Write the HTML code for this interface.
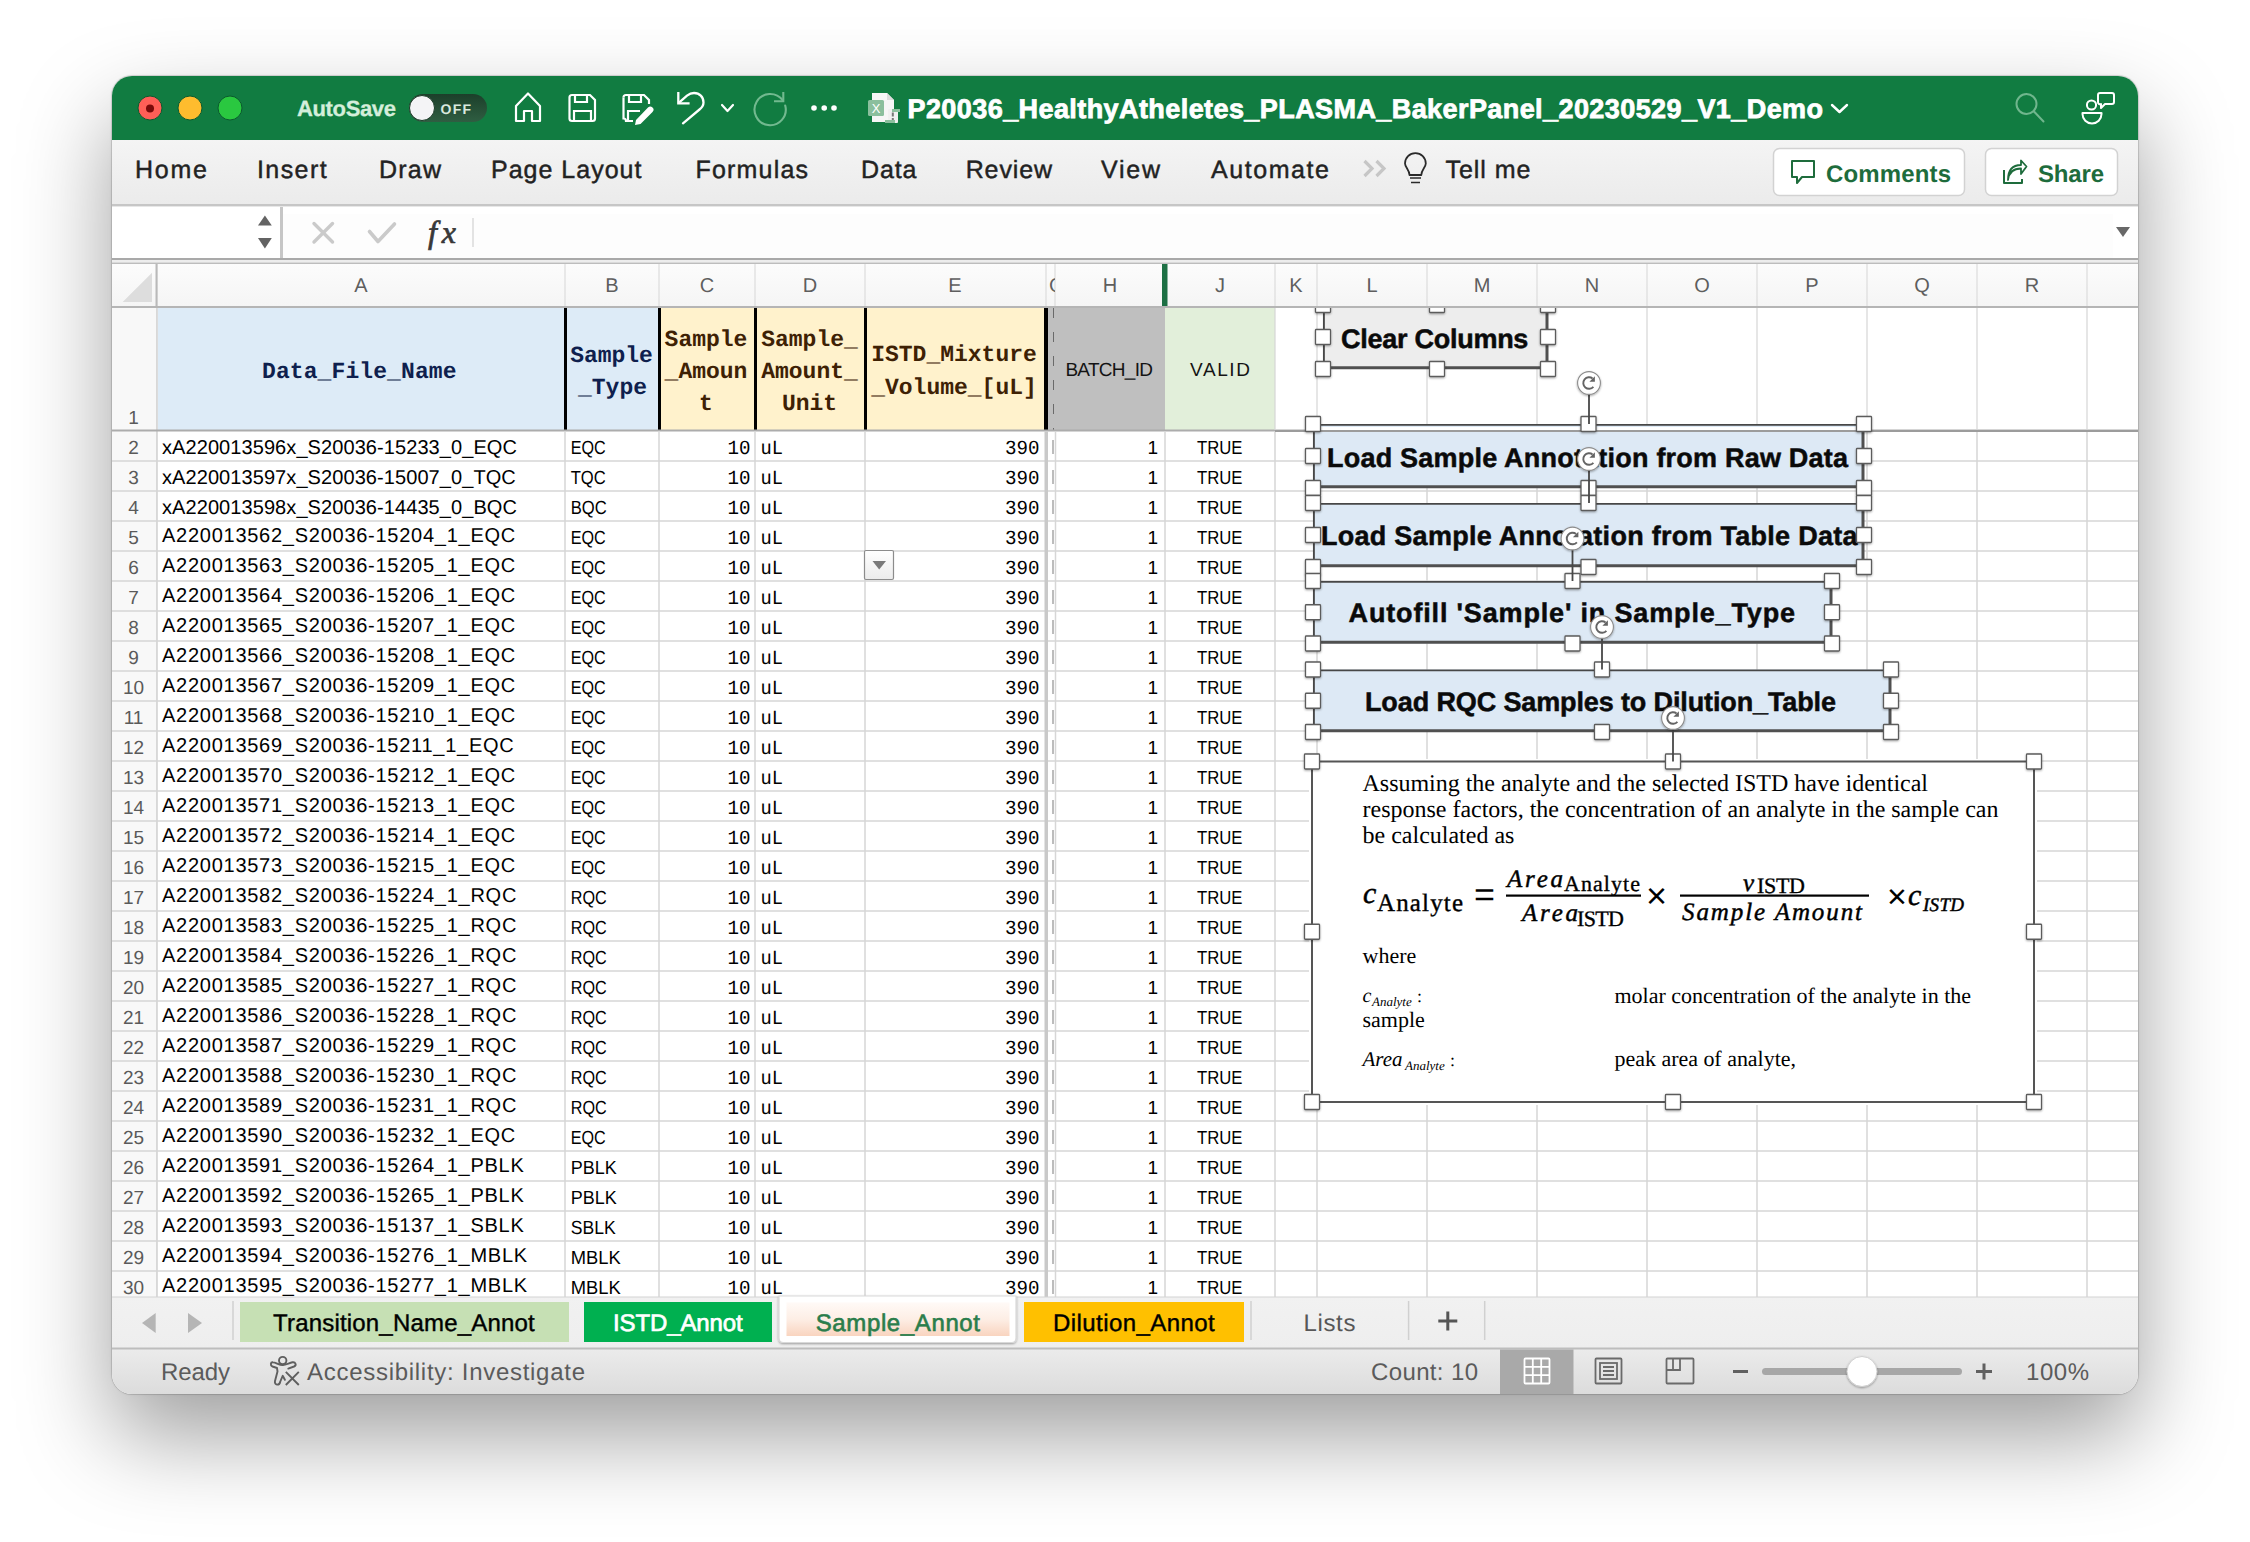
<!DOCTYPE html>
<html><head><meta charset="utf-8"><title>Excel</title>
<style>
html,body{margin:0;padding:0;background:#ffffff;}
body{width:2250px;height:1542px;position:relative;overflow:hidden;font-family:"Liberation Sans",sans-serif;}
#win{position:absolute;left:112px;top:76px;width:2026px;height:1318px;border-radius:20px;overflow:hidden;
box-shadow:0 42px 92px rgba(0,0,0,0.38),0 0 0 1px rgba(0,0,0,0.10),0 0 3px rgba(0,0,0,0.12);background:#fff;}
#win svg.main{position:absolute;left:-112px;top:-76px;}
</style></head>
<body>
<div id="win"><svg class="main" width="2250" height="1542" viewBox="0 0 2250 1542" text-rendering="geometricPrecision">
<defs>
<linearGradient id="gRib" x1="0" y1="0" x2="0" y2="1"><stop offset="0" stop-color="#f4f4f4"/><stop offset="1" stop-color="#ebebeb"/></linearGradient>
<linearGradient id="gColH" x1="0" y1="0" x2="0" y2="1"><stop offset="0" stop-color="#fcfcfc"/><stop offset="1" stop-color="#f5f5f5"/></linearGradient>
<linearGradient id="gStat" x1="0" y1="0" x2="0" y2="1"><stop offset="0" stop-color="#ebebeb"/><stop offset="1" stop-color="#dcdcdc"/></linearGradient>
<linearGradient id="gTabs" x1="0" y1="0" x2="0" y2="1"><stop offset="0" stop-color="#f1f1f1"/><stop offset="1" stop-color="#eeeeee"/></linearGradient>
<linearGradient id="gToggle" x1="0" y1="0" x2="0" y2="1"><stop offset="0" stop-color="#1c3f2a"/><stop offset="1" stop-color="#2f5e42"/></linearGradient>
<linearGradient id="gActive" x1="0" y1="0" x2="0" y2="1"><stop offset="0" stop-color="#fffaf7"/><stop offset="0.5" stop-color="#fdeee5"/><stop offset="1" stop-color="#f9d4bf"/></linearGradient>
<linearGradient id="gClear" x1="0" y1="0" x2="0" y2="1"><stop offset="0" stop-color="#f3f3f3"/><stop offset="1" stop-color="#e4e4e4"/></linearGradient>
<linearGradient id="gDrop" x1="0" y1="0" x2="0" y2="1"><stop offset="0" stop-color="#ffffff"/><stop offset="1" stop-color="#ececec"/></linearGradient>
<filter id="fSh" x="-50%" y="-50%" width="200%" height="200%"><feDropShadow dx="0" dy="1" stdDeviation="1.2" flood-color="#000" flood-opacity="0.35"/></filter>
</defs>
<rect x="112" y="76" width="2026" height="64" fill="#117c41"/>
<circle cx="150" cy="108" r="12" fill="#fe5f57" stroke="#0b5a2e" stroke-width="1"/>
<circle cx="190" cy="108" r="12" fill="#febc2e" stroke="#0b5a2e" stroke-width="1"/>
<circle cx="230" cy="108" r="12" fill="#2ac840" stroke="#0b5a2e" stroke-width="1"/>
<circle cx="150" cy="108.5" r="4" fill="#7a0a0a"/>
<text x="297" y="116" font-family="Liberation Sans" font-size="22" fill="#d4eedb" font-weight="bold" textLength="99" lengthAdjust="spacing" stroke="#d4eedb" stroke-width="0.3">AutoSave</text>
<rect x="409" y="94" width="78" height="28" fill="url(#gToggle)" rx="14"/>
<circle cx="422" cy="108" r="12.5" fill="#f4f4f6" stroke="#1b3a27" stroke-width="1"/>
<text x="440.5" y="113.8" font-family="Liberation Sans" font-size="14" fill="#d9e9de" font-weight="bold" textLength="30.5" lengthAdjust="spacing">OFF</text>
<path d="M516 106 L528 93.5 L540 106 L540 121 L532 121 L532 111 L524 111 L524 121 L516 121 Z" fill="none" stroke="#ffffff" stroke-width="2.2" stroke-linejoin="round"/>
<path d="M569.5 97.5 a2.5 2.5 0 0 1 2.5 -2.5 L590 95 L595 100 L595 118.5 a2.5 2.5 0 0 1 -2.5 2.5 L572 121 a2.5 2.5 0 0 1 -2.5 -2.5 Z" fill="none" stroke="#ffffff" stroke-width="2.2"/>
<path d="M575 95 L575 102 L587 102 L587 95" fill="none" stroke="#ffffff" stroke-width="2.2"/>
<path d="M574 121 L574 111 L591 111 L591 121" fill="none" stroke="#ffffff" stroke-width="2.2"/>
<path d="M623.5 97.5 a2.5 2.5 0 0 1 2.5 -2.5 L644 95 L649 100 L649 104" fill="none" stroke="#ffffff" stroke-width="2.2"/>
<path d="M623.5 97.5 L623.5 118.5 a2.5 2.5 0 0 1 2.5 2.5 L633 121" fill="none" stroke="#ffffff" stroke-width="2.2"/>
<path d="M629 95 L629 102 L641 102 L641 95" fill="none" stroke="#ffffff" stroke-width="2.2"/>
<path d="M628 121 L628 111 L640 111" fill="none" stroke="#ffffff" stroke-width="2.2"/>
<path d="M636 120 L648 107.5 a3 3 0 0 1 4.5 4.5 L640.5 124 L635 125 Z" fill="#ffffff"/>
<path d="M678.3 92 L678.3 103.3 L689.6 103.3" fill="none" stroke="#ffffff" stroke-width="2.3" stroke-linecap="butt" stroke-linejoin="miter"/>
<path d="M679 102.6 L687 95.6 C 690 93.3, 692 93, 694 93 C 699.5 93, 703.5 97, 703.5 102.5 C 703.5 105.5, 702 107.5, 699.5 109.5 L683 123.3" fill="none" stroke="#ffffff" stroke-width="2.3" stroke-linecap="round"/>
<path d="M722 105 L727.5 111 L733 105" fill="none" stroke="#ffffff" stroke-width="2.2" stroke-linecap="round" stroke-linejoin="round"/>
<path d="M782.6 100.2 A15.6 15.6 0 1 0 785.2 105.5" fill="none" stroke="#72b98f" stroke-width="2.1" stroke-linecap="round"/>
<path d="M783.3 92 L783.3 101.3 L774 101.3" fill="none" stroke="#72b98f" stroke-width="2.1" stroke-linecap="butt" stroke-linejoin="miter"/>
<circle cx="814" cy="108" r="2.8" fill="#fff"/>
<circle cx="824.2" cy="108" r="2.8" fill="#fff"/>
<circle cx="834" cy="108" r="2.8" fill="#fff"/>
<path d="M872 93 L887 93 L894 100 L894 122 L872 122 Z" fill="#f6f6f6"/>
<path d="M887 93 L887 100 L894 100" fill="#dcdcdc"/>
<rect x="868" y="100" width="16" height="16" fill="#8bbf9d" rx="1.5"/>
<text x="876" y="113" font-family="Liberation Sans" font-size="13" fill="#fff" text-anchor="middle">X</text>
<rect x="888" y="109" width="10" height="14" fill="#f0f0f0" rx="1"/>
<rect x="885" y="120" width="10" height="3" fill="#8bbf9d"/>
<rect x="892" y="109" width="8" height="3" fill="#8bbf9d"/>
<rect x="891.8" y="112.5" width="2" height="4" fill="#777"/>
<rect x="891.8" y="118" width="2" height="2" fill="#777"/>
<text x="907.5" y="118" font-family="Liberation Sans" font-size="27" fill="#fff" font-weight="bold" textLength="915.5" lengthAdjust="spacing" stroke="#fff" stroke-width="0.8">P20036_HealthyAtheletes_PLASMA_BakerPanel_20230529_V1_Demo</text>
<path d="M1832 105 L1839.5 112 L1847 105" fill="none" stroke="#ffffff" stroke-width="2.4" stroke-linecap="round" stroke-linejoin="round"/>
<circle cx="2026.5" cy="104" r="10" fill="none" stroke="#70b68d" stroke-width="2"/>
<line x1="2034" y1="111.5" x2="2043.5" y2="121.5" stroke="#70b68d" stroke-width="2" stroke-linecap="round"/>
<circle cx="2091.5" cy="105" r="4.6" fill="none" stroke="#fff" stroke-width="2"/>
<path d="M2082.5 113 H2101.5 V114 A9.5 9.5 0 0 1 2082.5 114 Z" fill="none" stroke="#ffffff" stroke-width="2" stroke-linejoin="round"/>
<path d="M2100 93 L2112 93 A2 2 0 0 1 2114 95 L2114 102 A2 2 0 0 1 2112 104 L2105 104 L2101 108 L2101 104 A 2 2 0 0 1 2098 102 L2098 95 A2 2 0 0 1 2100 93 Z" fill="#117c41" stroke="#ffffff" stroke-width="2" stroke-linejoin="round"/>
<rect x="112" y="140" width="2026" height="65" fill="url(#gRib)"/>
<rect x="112" y="204" width="2026" height="2.2" fill="#c6c6c6"/>
<rect x="112" y="206.2" width="2026" height="1" fill="#e4e4e4"/>
<text x="135" y="178" font-family="Liberation Sans" font-size="25" fill="#222" textLength="72" lengthAdjust="spacing" stroke="#222" stroke-width="0.45">Home</text>
<text x="257" y="178" font-family="Liberation Sans" font-size="25" fill="#222" textLength="69.6" lengthAdjust="spacing" stroke="#222" stroke-width="0.45">Insert</text>
<text x="379" y="178" font-family="Liberation Sans" font-size="25" fill="#222" textLength="62" lengthAdjust="spacing" stroke="#222" stroke-width="0.45">Draw</text>
<text x="491" y="178" font-family="Liberation Sans" font-size="25" fill="#222" textLength="150.4" lengthAdjust="spacing" stroke="#222" stroke-width="0.45">Page Layout</text>
<text x="695.4" y="178" font-family="Liberation Sans" font-size="25" fill="#222" textLength="112.6" lengthAdjust="spacing" stroke="#222" stroke-width="0.45">Formulas</text>
<text x="861" y="178" font-family="Liberation Sans" font-size="25" fill="#222" textLength="55.4" lengthAdjust="spacing" stroke="#222" stroke-width="0.45">Data</text>
<text x="965.7" y="178" font-family="Liberation Sans" font-size="25" fill="#222" textLength="86.3" lengthAdjust="spacing" stroke="#222" stroke-width="0.45">Review</text>
<text x="1101" y="178" font-family="Liberation Sans" font-size="25" fill="#222" textLength="59" lengthAdjust="spacing" stroke="#222" stroke-width="0.45">View</text>
<text x="1211" y="178" font-family="Liberation Sans" font-size="25" fill="#222" textLength="118" lengthAdjust="spacing" stroke="#222" stroke-width="0.45">Automate</text>
<text x="1445.6" y="178" font-family="Liberation Sans" font-size="25" fill="#222" textLength="84.8" lengthAdjust="spacing" stroke="#222" stroke-width="0.45">Tell me</text>
<path d="M1364.5 161 L1372 168.5 L1364.5 176 M1376.5 161 L1384 168.5 L1376.5 176" fill="none" stroke="#c6c6c6" stroke-width="3.2"/>
<path d="M1409.5 175 C 1409.5 170, 1405 167, 1405 163.5 A 10.4 10.4 0 0 1 1425.8 163.5 C 1425.8 167, 1421.3 170, 1421.3 175 Z" fill="none" stroke="#2a2a2a" stroke-width="1.8" stroke-linejoin="round"/>
<line x1="1410" y1="178" x2="1421" y2="178" stroke="#2a2a2a" stroke-width="1.6" />
<line x1="1411" y1="182.5" x2="1420" y2="182.5" stroke="#2a2a2a" stroke-width="1.6" />
<rect x="1773.5" y="148.5" width="191" height="47" fill="#ffffff" stroke="#d2d2d2" stroke-width="1.5" rx="6"/>
<rect x="1985.5" y="148.5" width="132" height="47" fill="#ffffff" stroke="#d2d2d2" stroke-width="1.5" rx="6"/>
<path d="M1792 161 L1814 161 L1814 177 L1802 177 L1797 183 L1797 177 L1792 177 Z" fill="none" stroke="#1e6c3c" stroke-width="2" stroke-linejoin="round"/>
<text x="1826" y="182" font-family="Liberation Sans" font-size="24" fill="#1e6c3c" font-weight="bold" textLength="125" lengthAdjust="spacing">Comments</text>
<path d="M2004 170 L2004 183 L2022 183 L2022 179" fill="none" stroke="#1e6c3c" stroke-width="2" stroke-linejoin="round"/>
<path d="M2008 180 C 2009 172, 2013 168.5, 2021 168.5 L2021 174 L2026.5 166.5 L2021 160.5 L2021 165 C 2013 165, 2008 170, 2008 180 Z" fill="none" stroke="#1e6c3c" stroke-width="1.8" stroke-linejoin="round"/>
<text x="2038" y="182" font-family="Liberation Sans" font-size="24" fill="#1e6c3c" font-weight="bold" textLength="66" lengthAdjust="spacing">Share</text>
<rect x="112" y="207" width="2026" height="51" fill="#ffffff"/>
<rect x="283" y="214" width="1830" height="44" fill="#fdfdfd"/>
<rect x="280" y="207" width="3" height="51" fill="#c6c6c6"/>
<path d="M258 225.5 L271.8 225.5 L264.9 215.6 Z" fill="#636363"/>
<path d="M258 238 L271.8 238 L264.9 248.6 Z" fill="#636363"/>
<line x1="314" y1="223.5" x2="332.5" y2="242" stroke="#cacaca" stroke-width="3.4" stroke-linecap="round"/>
<line x1="332.5" y1="223.5" x2="314" y2="242" stroke="#cacaca" stroke-width="3.4" stroke-linecap="round"/>
<path d="M369.5 231.5 L378 241.5 L394.5 224" fill="none" stroke="#cacaca" stroke-width="3.6" stroke-linecap="round" stroke-linejoin="round"/>
<text x="428" y="242.5" font-family="Liberation Serif" font-size="32" fill="#383838" textLength="28" lengthAdjust="spacing" style="font-style:italic" stroke="#383838" stroke-width="0.7">fx</text>
<line x1="473" y1="218" x2="473" y2="247" stroke="#dadada" stroke-width="1.5" />
<path d="M2116 227 L2130 227 L2123 237 Z" fill="#686868"/>
<rect x="112" y="258" width="2026" height="2" fill="#a9a9a9"/>
<rect x="112" y="260" width="2026" height="2.5" fill="#ededed"/>
<rect x="112" y="262.5" width="2026" height="1.5" fill="#bdbdbd"/>
<rect x="112" y="264" width="2026" height="43" fill="url(#gColH)"/>
<line x1="157" y1="264" x2="157" y2="307" stroke="#dcdcdc" stroke-width="1.2" />
<line x1="565" y1="264" x2="565" y2="307" stroke="#dcdcdc" stroke-width="1.2" />
<line x1="659" y1="264" x2="659" y2="307" stroke="#dcdcdc" stroke-width="1.2" />
<line x1="755" y1="264" x2="755" y2="307" stroke="#dcdcdc" stroke-width="1.2" />
<line x1="865" y1="264" x2="865" y2="307" stroke="#dcdcdc" stroke-width="1.2" />
<line x1="1046" y1="264" x2="1046" y2="307" stroke="#dcdcdc" stroke-width="1.2" />
<line x1="1055" y1="264" x2="1055" y2="307" stroke="#dcdcdc" stroke-width="1.2" />
<line x1="1165" y1="264" x2="1165" y2="307" stroke="#dcdcdc" stroke-width="1.2" />
<line x1="1275" y1="264" x2="1275" y2="307" stroke="#dcdcdc" stroke-width="1.2" />
<line x1="1317" y1="264" x2="1317" y2="307" stroke="#dcdcdc" stroke-width="1.2" />
<line x1="1427" y1="264" x2="1427" y2="307" stroke="#dcdcdc" stroke-width="1.2" />
<line x1="1537" y1="264" x2="1537" y2="307" stroke="#dcdcdc" stroke-width="1.2" />
<line x1="1647" y1="264" x2="1647" y2="307" stroke="#dcdcdc" stroke-width="1.2" />
<line x1="1757" y1="264" x2="1757" y2="307" stroke="#dcdcdc" stroke-width="1.2" />
<line x1="1867" y1="264" x2="1867" y2="307" stroke="#dcdcdc" stroke-width="1.2" />
<line x1="1977" y1="264" x2="1977" y2="307" stroke="#dcdcdc" stroke-width="1.2" />
<line x1="2087" y1="264" x2="2087" y2="307" stroke="#dcdcdc" stroke-width="1.2" />
<line x1="156.5" y1="264" x2="156.5" y2="1297" stroke="#b9b9b9" stroke-width="2" />
<path d="M122.7 302 L152 302 L152 272.7 Z" fill="#dddddd"/>
<text x="361" y="292" font-family="Liberation Sans" font-size="20" fill="#5e5e5e" text-anchor="middle">A</text>
<text x="612" y="292" font-family="Liberation Sans" font-size="20" fill="#5e5e5e" text-anchor="middle">B</text>
<text x="707" y="292" font-family="Liberation Sans" font-size="20" fill="#5e5e5e" text-anchor="middle">C</text>
<text x="810" y="292" font-family="Liberation Sans" font-size="20" fill="#5e5e5e" text-anchor="middle">D</text>
<text x="955" y="292" font-family="Liberation Sans" font-size="20" fill="#5e5e5e" text-anchor="middle">E</text>
<text x="1110" y="292" font-family="Liberation Sans" font-size="20" fill="#5e5e5e" text-anchor="middle">H</text>
<text x="1220" y="292" font-family="Liberation Sans" font-size="20" fill="#5e5e5e" text-anchor="middle">J</text>
<text x="1296" y="292" font-family="Liberation Sans" font-size="20" fill="#5e5e5e" text-anchor="middle">K</text>
<text x="1372" y="292" font-family="Liberation Sans" font-size="20" fill="#5e5e5e" text-anchor="middle">L</text>
<text x="1482" y="292" font-family="Liberation Sans" font-size="20" fill="#5e5e5e" text-anchor="middle">M</text>
<text x="1592" y="292" font-family="Liberation Sans" font-size="20" fill="#5e5e5e" text-anchor="middle">N</text>
<text x="1702" y="292" font-family="Liberation Sans" font-size="20" fill="#5e5e5e" text-anchor="middle">O</text>
<text x="1812" y="292" font-family="Liberation Sans" font-size="20" fill="#5e5e5e" text-anchor="middle">P</text>
<text x="1922" y="292" font-family="Liberation Sans" font-size="20" fill="#5e5e5e" text-anchor="middle">Q</text>
<text x="2032" y="292" font-family="Liberation Sans" font-size="20" fill="#5e5e5e" text-anchor="middle">R</text>
<svg x="1048" y="264" width="7" height="43"><text x="1" y="28" font-family="Liberation Sans" font-size="20" fill="#5e5e5e">G</text></svg>
<rect x="1162" y="264" width="5.5" height="43" fill="#1d7044"/>
<rect x="112" y="306" width="2026" height="2" fill="#b5b5b5"/>
<rect x="112" y="308" width="44.5" height="989" fill="#f8f8f8"/>
<rect x="158" y="308" width="407" height="122" fill="#ddebf7"/>
<rect x="565" y="308" width="94" height="122" fill="#ddebf7"/>
<rect x="659" y="308" width="386" height="122" fill="#fff2cc"/>
<rect x="1046" y="308" width="119" height="122" fill="#bfbfbf"/>
<rect x="1165" y="308" width="110" height="122" fill="#e2efda"/>
<rect x="564" y="308" width="3" height="122" fill="#000"/>
<rect x="658" y="308" width="3" height="122" fill="#000"/>
<rect x="754" y="308" width="3" height="122" fill="#000"/>
<rect x="864" y="308" width="3" height="122" fill="#000"/>
<rect x="1044" y="308" width="4" height="122" fill="#000"/>
<line x1="1053.5" y1="308" x2="1053.5" y2="430" stroke="#6a6a6a" stroke-width="1" stroke-dasharray="10 14"/>
<text x="133.5" y="424" font-family="Liberation Sans" font-size="19" fill="#5a5a5a" text-anchor="middle">1</text>
<text x="262" y="378" font-family="Liberation Mono" font-size="23" fill="#0f1f4e" font-weight="bold" textLength="194.5" lengthAdjust="spacing">Data_File_Name</text>
<text x="611.5" y="362" font-family="Liberation Mono" font-size="23" fill="#0f1f4e" font-weight="bold" text-anchor="middle" textLength="82.5" lengthAdjust="spacing">Sample</text>
<text x="612.5" y="394" font-family="Liberation Mono" font-size="23" fill="#0f1f4e" font-weight="bold" text-anchor="middle" textLength="69" lengthAdjust="spacing">_Type</text>
<text x="706" y="345.5" font-family="Liberation Mono" font-size="23" fill="#3e2104" font-weight="bold" text-anchor="middle">Sample</text>
<text x="706" y="377.5" font-family="Liberation Mono" font-size="23" fill="#3e2104" font-weight="bold" text-anchor="middle">_Amoun</text>
<text x="706" y="409.5" font-family="Liberation Mono" font-size="23" fill="#3e2104" font-weight="bold" text-anchor="middle">t</text>
<text x="809.5" y="345.5" font-family="Liberation Mono" font-size="23" fill="#3e2104" font-weight="bold" text-anchor="middle">Sample_</text>
<text x="809.5" y="377.5" font-family="Liberation Mono" font-size="23" fill="#3e2104" font-weight="bold" text-anchor="middle">Amount_</text>
<text x="809.5" y="409.5" font-family="Liberation Mono" font-size="23" fill="#3e2104" font-weight="bold" text-anchor="middle">Unit</text>
<text x="954" y="361" font-family="Liberation Mono" font-size="23" fill="#3e2104" font-weight="bold" text-anchor="middle">ISTD_Mixture</text>
<text x="954" y="393.8" font-family="Liberation Mono" font-size="23" fill="#3e2104" font-weight="bold" text-anchor="middle">_Volume_[uL]</text>
<text x="1065.4" y="376" font-family="Liberation Sans" font-size="19" fill="#141414" textLength="87.6" lengthAdjust="spacing">BATCH_ID</text>
<text x="1190" y="376" font-family="Liberation Sans" font-size="19" fill="#141414" textLength="60" lengthAdjust="spacing">VALID</text>
<rect x="112" y="429.5" width="2026" height="2" fill="#acacac"/>
<line x1="112" y1="461" x2="2138" y2="461" stroke="#d6d6d6" stroke-width="1.5" />
<line x1="112" y1="491" x2="2138" y2="491" stroke="#d6d6d6" stroke-width="1.5" />
<line x1="112" y1="521" x2="2138" y2="521" stroke="#d6d6d6" stroke-width="1.5" />
<line x1="112" y1="551" x2="2138" y2="551" stroke="#d6d6d6" stroke-width="1.5" />
<line x1="112" y1="581" x2="2138" y2="581" stroke="#d6d6d6" stroke-width="1.5" />
<line x1="112" y1="611" x2="2138" y2="611" stroke="#d6d6d6" stroke-width="1.5" />
<line x1="112" y1="641" x2="2138" y2="641" stroke="#d6d6d6" stroke-width="1.5" />
<line x1="112" y1="671" x2="2138" y2="671" stroke="#d6d6d6" stroke-width="1.5" />
<line x1="112" y1="701" x2="2138" y2="701" stroke="#d6d6d6" stroke-width="1.5" />
<line x1="112" y1="731" x2="2138" y2="731" stroke="#d6d6d6" stroke-width="1.5" />
<line x1="112" y1="761" x2="2138" y2="761" stroke="#d6d6d6" stroke-width="1.5" />
<line x1="112" y1="791" x2="2138" y2="791" stroke="#d6d6d6" stroke-width="1.5" />
<line x1="112" y1="821" x2="2138" y2="821" stroke="#d6d6d6" stroke-width="1.5" />
<line x1="112" y1="851" x2="2138" y2="851" stroke="#d6d6d6" stroke-width="1.5" />
<line x1="112" y1="881" x2="2138" y2="881" stroke="#d6d6d6" stroke-width="1.5" />
<line x1="112" y1="911" x2="2138" y2="911" stroke="#d6d6d6" stroke-width="1.5" />
<line x1="112" y1="941" x2="2138" y2="941" stroke="#d6d6d6" stroke-width="1.5" />
<line x1="112" y1="971" x2="2138" y2="971" stroke="#d6d6d6" stroke-width="1.5" />
<line x1="112" y1="1001" x2="2138" y2="1001" stroke="#d6d6d6" stroke-width="1.5" />
<line x1="112" y1="1031" x2="2138" y2="1031" stroke="#d6d6d6" stroke-width="1.5" />
<line x1="112" y1="1061" x2="2138" y2="1061" stroke="#d6d6d6" stroke-width="1.5" />
<line x1="112" y1="1091" x2="2138" y2="1091" stroke="#d6d6d6" stroke-width="1.5" />
<line x1="112" y1="1121" x2="2138" y2="1121" stroke="#d6d6d6" stroke-width="1.5" />
<line x1="112" y1="1151" x2="2138" y2="1151" stroke="#d6d6d6" stroke-width="1.5" />
<line x1="112" y1="1181" x2="2138" y2="1181" stroke="#d6d6d6" stroke-width="1.5" />
<line x1="112" y1="1211" x2="2138" y2="1211" stroke="#d6d6d6" stroke-width="1.5" />
<line x1="112" y1="1241" x2="2138" y2="1241" stroke="#d6d6d6" stroke-width="1.5" />
<line x1="112" y1="1271" x2="2138" y2="1271" stroke="#d6d6d6" stroke-width="1.5" />
<line x1="565" y1="431.5" x2="565" y2="1297" stroke="#d6d6d6" stroke-width="1.5" />
<line x1="659" y1="431.5" x2="659" y2="1297" stroke="#d6d6d6" stroke-width="1.5" />
<line x1="755" y1="431.5" x2="755" y2="1297" stroke="#d6d6d6" stroke-width="1.5" />
<line x1="865" y1="431.5" x2="865" y2="1297" stroke="#d6d6d6" stroke-width="1.5" />
<line x1="1055.5" y1="431.5" x2="1055.5" y2="1297" stroke="#d6d6d6" stroke-width="1.5" />
<line x1="1165" y1="431.5" x2="1165" y2="1297" stroke="#d6d6d6" stroke-width="1.5" />
<line x1="1275" y1="431.5" x2="1275" y2="1297" stroke="#d6d6d6" stroke-width="1.5" />
<line x1="1317" y1="431.5" x2="1317" y2="1297" stroke="#d6d6d6" stroke-width="1.5" />
<line x1="1427" y1="431.5" x2="1427" y2="1297" stroke="#d6d6d6" stroke-width="1.5" />
<line x1="1537" y1="431.5" x2="1537" y2="1297" stroke="#d6d6d6" stroke-width="1.5" />
<line x1="1647" y1="431.5" x2="1647" y2="1297" stroke="#d6d6d6" stroke-width="1.5" />
<line x1="1757" y1="431.5" x2="1757" y2="1297" stroke="#d6d6d6" stroke-width="1.5" />
<line x1="1867" y1="431.5" x2="1867" y2="1297" stroke="#d6d6d6" stroke-width="1.5" />
<line x1="1977" y1="431.5" x2="1977" y2="1297" stroke="#d6d6d6" stroke-width="1.5" />
<line x1="2087" y1="431.5" x2="2087" y2="1297" stroke="#d6d6d6" stroke-width="1.5" />
<rect x="1044.5" y="431.5" width="3.5" height="866" fill="#c9c9c9"/>
<line x1="1275" y1="308" x2="1275" y2="430" stroke="#d6d6d6" stroke-width="1.2" />
<line x1="1317" y1="308" x2="1317" y2="430" stroke="#d6d6d6" stroke-width="1.2" />
<line x1="1427" y1="308" x2="1427" y2="430" stroke="#d6d6d6" stroke-width="1.2" />
<line x1="1537" y1="308" x2="1537" y2="430" stroke="#d6d6d6" stroke-width="1.2" />
<line x1="1647" y1="308" x2="1647" y2="430" stroke="#d6d6d6" stroke-width="1.2" />
<line x1="1757" y1="308" x2="1757" y2="430" stroke="#d6d6d6" stroke-width="1.2" />
<line x1="1867" y1="308" x2="1867" y2="430" stroke="#d6d6d6" stroke-width="1.2" />
<line x1="1977" y1="308" x2="1977" y2="430" stroke="#d6d6d6" stroke-width="1.2" />
<line x1="2087" y1="308" x2="2087" y2="430" stroke="#d6d6d6" stroke-width="1.2" />
<g id="rows">
<text x="133.5" y="454" font-family="Liberation Sans" font-size="19" fill="#5a5a5a" text-anchor="middle">2</text>
<text x="162" y="454" font-family="Liberation Sans" font-size="20" fill="#000" style="letter-spacing:0.08px">xA220013596x_S20036-15233_0_EQC</text>
<text x="570.7" y="454" font-family="Liberation Sans" font-size="19" fill="#000" textLength="35" lengthAdjust="spacingAndGlyphs">EQC</text>
<text x="750.5" y="454" font-family="Liberation Mono" font-size="20" fill="#000" text-anchor="end" textLength="23" lengthAdjust="spacingAndGlyphs">10</text>
<text x="760.5" y="454" font-family="Liberation Mono" font-size="20" fill="#000" textLength="22.5" lengthAdjust="spacingAndGlyphs">uL</text>
<text x="1039.5" y="454" font-family="Liberation Mono" font-size="20" fill="#000" text-anchor="end" textLength="34.5" lengthAdjust="spacingAndGlyphs">390</text>
<rect x="1052.5" y="440" width="1" height="14" fill="#7a7a7a"/>
<text x="1158" y="454" font-family="Liberation Sans" font-size="19" fill="#000" text-anchor="end">1</text>
<text x="1219.7" y="454" font-family="Liberation Sans" font-size="19" fill="#000" text-anchor="middle" textLength="45.5" lengthAdjust="spacingAndGlyphs">TRUE</text>
<text x="133.5" y="484" font-family="Liberation Sans" font-size="19" fill="#5a5a5a" text-anchor="middle">3</text>
<text x="162" y="484" font-family="Liberation Sans" font-size="20" fill="#000" style="letter-spacing:0.08px">xA220013597x_S20036-15007_0_TQC</text>
<text x="570.7" y="484" font-family="Liberation Sans" font-size="19" fill="#000" textLength="35" lengthAdjust="spacingAndGlyphs">TQC</text>
<text x="750.5" y="484" font-family="Liberation Mono" font-size="20" fill="#000" text-anchor="end" textLength="23" lengthAdjust="spacingAndGlyphs">10</text>
<text x="760.5" y="484" font-family="Liberation Mono" font-size="20" fill="#000" textLength="22.5" lengthAdjust="spacingAndGlyphs">uL</text>
<text x="1039.5" y="484" font-family="Liberation Mono" font-size="20" fill="#000" text-anchor="end" textLength="34.5" lengthAdjust="spacingAndGlyphs">390</text>
<rect x="1052.5" y="470" width="1" height="14" fill="#7a7a7a"/>
<text x="1158" y="484" font-family="Liberation Sans" font-size="19" fill="#000" text-anchor="end">1</text>
<text x="1219.7" y="484" font-family="Liberation Sans" font-size="19" fill="#000" text-anchor="middle" textLength="45.5" lengthAdjust="spacingAndGlyphs">TRUE</text>
<text x="133.5" y="514" font-family="Liberation Sans" font-size="19" fill="#5a5a5a" text-anchor="middle">4</text>
<text x="162" y="514" font-family="Liberation Sans" font-size="20" fill="#000" style="letter-spacing:0.08px">xA220013598x_S20036-14435_0_BQC</text>
<text x="570.7" y="514" font-family="Liberation Sans" font-size="19" fill="#000" textLength="36" lengthAdjust="spacingAndGlyphs">BQC</text>
<text x="750.5" y="514" font-family="Liberation Mono" font-size="20" fill="#000" text-anchor="end" textLength="23" lengthAdjust="spacingAndGlyphs">10</text>
<text x="760.5" y="514" font-family="Liberation Mono" font-size="20" fill="#000" textLength="22.5" lengthAdjust="spacingAndGlyphs">uL</text>
<text x="1039.5" y="514" font-family="Liberation Mono" font-size="20" fill="#000" text-anchor="end" textLength="34.5" lengthAdjust="spacingAndGlyphs">390</text>
<rect x="1052.5" y="500" width="1" height="14" fill="#7a7a7a"/>
<text x="1158" y="514" font-family="Liberation Sans" font-size="19" fill="#000" text-anchor="end">1</text>
<text x="1219.7" y="514" font-family="Liberation Sans" font-size="19" fill="#000" text-anchor="middle" textLength="45.5" lengthAdjust="spacingAndGlyphs">TRUE</text>
<text x="133.5" y="544" font-family="Liberation Sans" font-size="19" fill="#5a5a5a" text-anchor="middle">5</text>
<text x="162" y="542" font-family="Liberation Sans" font-size="20" fill="#000" style="letter-spacing:0.74px">A220013562_S20036-15204_1_EQC</text>
<text x="570.7" y="544" font-family="Liberation Sans" font-size="19" fill="#000" textLength="35" lengthAdjust="spacingAndGlyphs">EQC</text>
<text x="750.5" y="544" font-family="Liberation Mono" font-size="20" fill="#000" text-anchor="end" textLength="23" lengthAdjust="spacingAndGlyphs">10</text>
<text x="760.5" y="544" font-family="Liberation Mono" font-size="20" fill="#000" textLength="22.5" lengthAdjust="spacingAndGlyphs">uL</text>
<text x="1039.5" y="544" font-family="Liberation Mono" font-size="20" fill="#000" text-anchor="end" textLength="34.5" lengthAdjust="spacingAndGlyphs">390</text>
<rect x="1052.5" y="530" width="1" height="14" fill="#7a7a7a"/>
<text x="1158" y="544" font-family="Liberation Sans" font-size="19" fill="#000" text-anchor="end">1</text>
<text x="1219.7" y="544" font-family="Liberation Sans" font-size="19" fill="#000" text-anchor="middle" textLength="45.5" lengthAdjust="spacingAndGlyphs">TRUE</text>
<text x="133.5" y="574" font-family="Liberation Sans" font-size="19" fill="#5a5a5a" text-anchor="middle">6</text>
<text x="162" y="572" font-family="Liberation Sans" font-size="20" fill="#000" style="letter-spacing:0.74px">A220013563_S20036-15205_1_EQC</text>
<text x="570.7" y="574" font-family="Liberation Sans" font-size="19" fill="#000" textLength="35" lengthAdjust="spacingAndGlyphs">EQC</text>
<text x="750.5" y="574" font-family="Liberation Mono" font-size="20" fill="#000" text-anchor="end" textLength="23" lengthAdjust="spacingAndGlyphs">10</text>
<text x="760.5" y="574" font-family="Liberation Mono" font-size="20" fill="#000" textLength="22.5" lengthAdjust="spacingAndGlyphs">uL</text>
<text x="1039.5" y="574" font-family="Liberation Mono" font-size="20" fill="#000" text-anchor="end" textLength="34.5" lengthAdjust="spacingAndGlyphs">390</text>
<rect x="1052.5" y="560" width="1" height="14" fill="#7a7a7a"/>
<text x="1158" y="574" font-family="Liberation Sans" font-size="19" fill="#000" text-anchor="end">1</text>
<text x="1219.7" y="574" font-family="Liberation Sans" font-size="19" fill="#000" text-anchor="middle" textLength="45.5" lengthAdjust="spacingAndGlyphs">TRUE</text>
<text x="133.5" y="604" font-family="Liberation Sans" font-size="19" fill="#5a5a5a" text-anchor="middle">7</text>
<text x="162" y="602" font-family="Liberation Sans" font-size="20" fill="#000" style="letter-spacing:0.74px">A220013564_S20036-15206_1_EQC</text>
<text x="570.7" y="604" font-family="Liberation Sans" font-size="19" fill="#000" textLength="35" lengthAdjust="spacingAndGlyphs">EQC</text>
<text x="750.5" y="604" font-family="Liberation Mono" font-size="20" fill="#000" text-anchor="end" textLength="23" lengthAdjust="spacingAndGlyphs">10</text>
<text x="760.5" y="604" font-family="Liberation Mono" font-size="20" fill="#000" textLength="22.5" lengthAdjust="spacingAndGlyphs">uL</text>
<text x="1039.5" y="604" font-family="Liberation Mono" font-size="20" fill="#000" text-anchor="end" textLength="34.5" lengthAdjust="spacingAndGlyphs">390</text>
<rect x="1052.5" y="590" width="1" height="14" fill="#7a7a7a"/>
<text x="1158" y="604" font-family="Liberation Sans" font-size="19" fill="#000" text-anchor="end">1</text>
<text x="1219.7" y="604" font-family="Liberation Sans" font-size="19" fill="#000" text-anchor="middle" textLength="45.5" lengthAdjust="spacingAndGlyphs">TRUE</text>
<text x="133.5" y="634" font-family="Liberation Sans" font-size="19" fill="#5a5a5a" text-anchor="middle">8</text>
<text x="162" y="632" font-family="Liberation Sans" font-size="20" fill="#000" style="letter-spacing:0.74px">A220013565_S20036-15207_1_EQC</text>
<text x="570.7" y="634" font-family="Liberation Sans" font-size="19" fill="#000" textLength="35" lengthAdjust="spacingAndGlyphs">EQC</text>
<text x="750.5" y="634" font-family="Liberation Mono" font-size="20" fill="#000" text-anchor="end" textLength="23" lengthAdjust="spacingAndGlyphs">10</text>
<text x="760.5" y="634" font-family="Liberation Mono" font-size="20" fill="#000" textLength="22.5" lengthAdjust="spacingAndGlyphs">uL</text>
<text x="1039.5" y="634" font-family="Liberation Mono" font-size="20" fill="#000" text-anchor="end" textLength="34.5" lengthAdjust="spacingAndGlyphs">390</text>
<rect x="1052.5" y="620" width="1" height="14" fill="#7a7a7a"/>
<text x="1158" y="634" font-family="Liberation Sans" font-size="19" fill="#000" text-anchor="end">1</text>
<text x="1219.7" y="634" font-family="Liberation Sans" font-size="19" fill="#000" text-anchor="middle" textLength="45.5" lengthAdjust="spacingAndGlyphs">TRUE</text>
<text x="133.5" y="664" font-family="Liberation Sans" font-size="19" fill="#5a5a5a" text-anchor="middle">9</text>
<text x="162" y="662" font-family="Liberation Sans" font-size="20" fill="#000" style="letter-spacing:0.74px">A220013566_S20036-15208_1_EQC</text>
<text x="570.7" y="664" font-family="Liberation Sans" font-size="19" fill="#000" textLength="35" lengthAdjust="spacingAndGlyphs">EQC</text>
<text x="750.5" y="664" font-family="Liberation Mono" font-size="20" fill="#000" text-anchor="end" textLength="23" lengthAdjust="spacingAndGlyphs">10</text>
<text x="760.5" y="664" font-family="Liberation Mono" font-size="20" fill="#000" textLength="22.5" lengthAdjust="spacingAndGlyphs">uL</text>
<text x="1039.5" y="664" font-family="Liberation Mono" font-size="20" fill="#000" text-anchor="end" textLength="34.5" lengthAdjust="spacingAndGlyphs">390</text>
<rect x="1052.5" y="650" width="1" height="14" fill="#7a7a7a"/>
<text x="1158" y="664" font-family="Liberation Sans" font-size="19" fill="#000" text-anchor="end">1</text>
<text x="1219.7" y="664" font-family="Liberation Sans" font-size="19" fill="#000" text-anchor="middle" textLength="45.5" lengthAdjust="spacingAndGlyphs">TRUE</text>
<text x="133.5" y="694" font-family="Liberation Sans" font-size="19" fill="#5a5a5a" text-anchor="middle">10</text>
<text x="162" y="692" font-family="Liberation Sans" font-size="20" fill="#000" style="letter-spacing:0.74px">A220013567_S20036-15209_1_EQC</text>
<text x="570.7" y="694" font-family="Liberation Sans" font-size="19" fill="#000" textLength="35" lengthAdjust="spacingAndGlyphs">EQC</text>
<text x="750.5" y="694" font-family="Liberation Mono" font-size="20" fill="#000" text-anchor="end" textLength="23" lengthAdjust="spacingAndGlyphs">10</text>
<text x="760.5" y="694" font-family="Liberation Mono" font-size="20" fill="#000" textLength="22.5" lengthAdjust="spacingAndGlyphs">uL</text>
<text x="1039.5" y="694" font-family="Liberation Mono" font-size="20" fill="#000" text-anchor="end" textLength="34.5" lengthAdjust="spacingAndGlyphs">390</text>
<rect x="1052.5" y="680" width="1" height="14" fill="#7a7a7a"/>
<text x="1158" y="694" font-family="Liberation Sans" font-size="19" fill="#000" text-anchor="end">1</text>
<text x="1219.7" y="694" font-family="Liberation Sans" font-size="19" fill="#000" text-anchor="middle" textLength="45.5" lengthAdjust="spacingAndGlyphs">TRUE</text>
<text x="133.5" y="724" font-family="Liberation Sans" font-size="19" fill="#5a5a5a" text-anchor="middle">11</text>
<text x="162" y="722" font-family="Liberation Sans" font-size="20" fill="#000" style="letter-spacing:0.74px">A220013568_S20036-15210_1_EQC</text>
<text x="570.7" y="724" font-family="Liberation Sans" font-size="19" fill="#000" textLength="35" lengthAdjust="spacingAndGlyphs">EQC</text>
<text x="750.5" y="724" font-family="Liberation Mono" font-size="20" fill="#000" text-anchor="end" textLength="23" lengthAdjust="spacingAndGlyphs">10</text>
<text x="760.5" y="724" font-family="Liberation Mono" font-size="20" fill="#000" textLength="22.5" lengthAdjust="spacingAndGlyphs">uL</text>
<text x="1039.5" y="724" font-family="Liberation Mono" font-size="20" fill="#000" text-anchor="end" textLength="34.5" lengthAdjust="spacingAndGlyphs">390</text>
<rect x="1052.5" y="710" width="1" height="14" fill="#7a7a7a"/>
<text x="1158" y="724" font-family="Liberation Sans" font-size="19" fill="#000" text-anchor="end">1</text>
<text x="1219.7" y="724" font-family="Liberation Sans" font-size="19" fill="#000" text-anchor="middle" textLength="45.5" lengthAdjust="spacingAndGlyphs">TRUE</text>
<text x="133.5" y="754" font-family="Liberation Sans" font-size="19" fill="#5a5a5a" text-anchor="middle">12</text>
<text x="162" y="752" font-family="Liberation Sans" font-size="20" fill="#000" style="letter-spacing:0.74px">A220013569_S20036-15211_1_EQC</text>
<text x="570.7" y="754" font-family="Liberation Sans" font-size="19" fill="#000" textLength="35" lengthAdjust="spacingAndGlyphs">EQC</text>
<text x="750.5" y="754" font-family="Liberation Mono" font-size="20" fill="#000" text-anchor="end" textLength="23" lengthAdjust="spacingAndGlyphs">10</text>
<text x="760.5" y="754" font-family="Liberation Mono" font-size="20" fill="#000" textLength="22.5" lengthAdjust="spacingAndGlyphs">uL</text>
<text x="1039.5" y="754" font-family="Liberation Mono" font-size="20" fill="#000" text-anchor="end" textLength="34.5" lengthAdjust="spacingAndGlyphs">390</text>
<rect x="1052.5" y="740" width="1" height="14" fill="#7a7a7a"/>
<text x="1158" y="754" font-family="Liberation Sans" font-size="19" fill="#000" text-anchor="end">1</text>
<text x="1219.7" y="754" font-family="Liberation Sans" font-size="19" fill="#000" text-anchor="middle" textLength="45.5" lengthAdjust="spacingAndGlyphs">TRUE</text>
<text x="133.5" y="784" font-family="Liberation Sans" font-size="19" fill="#5a5a5a" text-anchor="middle">13</text>
<text x="162" y="782" font-family="Liberation Sans" font-size="20" fill="#000" style="letter-spacing:0.74px">A220013570_S20036-15212_1_EQC</text>
<text x="570.7" y="784" font-family="Liberation Sans" font-size="19" fill="#000" textLength="35" lengthAdjust="spacingAndGlyphs">EQC</text>
<text x="750.5" y="784" font-family="Liberation Mono" font-size="20" fill="#000" text-anchor="end" textLength="23" lengthAdjust="spacingAndGlyphs">10</text>
<text x="760.5" y="784" font-family="Liberation Mono" font-size="20" fill="#000" textLength="22.5" lengthAdjust="spacingAndGlyphs">uL</text>
<text x="1039.5" y="784" font-family="Liberation Mono" font-size="20" fill="#000" text-anchor="end" textLength="34.5" lengthAdjust="spacingAndGlyphs">390</text>
<rect x="1052.5" y="770" width="1" height="14" fill="#7a7a7a"/>
<text x="1158" y="784" font-family="Liberation Sans" font-size="19" fill="#000" text-anchor="end">1</text>
<text x="1219.7" y="784" font-family="Liberation Sans" font-size="19" fill="#000" text-anchor="middle" textLength="45.5" lengthAdjust="spacingAndGlyphs">TRUE</text>
<text x="133.5" y="814" font-family="Liberation Sans" font-size="19" fill="#5a5a5a" text-anchor="middle">14</text>
<text x="162" y="812" font-family="Liberation Sans" font-size="20" fill="#000" style="letter-spacing:0.74px">A220013571_S20036-15213_1_EQC</text>
<text x="570.7" y="814" font-family="Liberation Sans" font-size="19" fill="#000" textLength="35" lengthAdjust="spacingAndGlyphs">EQC</text>
<text x="750.5" y="814" font-family="Liberation Mono" font-size="20" fill="#000" text-anchor="end" textLength="23" lengthAdjust="spacingAndGlyphs">10</text>
<text x="760.5" y="814" font-family="Liberation Mono" font-size="20" fill="#000" textLength="22.5" lengthAdjust="spacingAndGlyphs">uL</text>
<text x="1039.5" y="814" font-family="Liberation Mono" font-size="20" fill="#000" text-anchor="end" textLength="34.5" lengthAdjust="spacingAndGlyphs">390</text>
<rect x="1052.5" y="800" width="1" height="14" fill="#7a7a7a"/>
<text x="1158" y="814" font-family="Liberation Sans" font-size="19" fill="#000" text-anchor="end">1</text>
<text x="1219.7" y="814" font-family="Liberation Sans" font-size="19" fill="#000" text-anchor="middle" textLength="45.5" lengthAdjust="spacingAndGlyphs">TRUE</text>
<text x="133.5" y="844" font-family="Liberation Sans" font-size="19" fill="#5a5a5a" text-anchor="middle">15</text>
<text x="162" y="842" font-family="Liberation Sans" font-size="20" fill="#000" style="letter-spacing:0.74px">A220013572_S20036-15214_1_EQC</text>
<text x="570.7" y="844" font-family="Liberation Sans" font-size="19" fill="#000" textLength="35" lengthAdjust="spacingAndGlyphs">EQC</text>
<text x="750.5" y="844" font-family="Liberation Mono" font-size="20" fill="#000" text-anchor="end" textLength="23" lengthAdjust="spacingAndGlyphs">10</text>
<text x="760.5" y="844" font-family="Liberation Mono" font-size="20" fill="#000" textLength="22.5" lengthAdjust="spacingAndGlyphs">uL</text>
<text x="1039.5" y="844" font-family="Liberation Mono" font-size="20" fill="#000" text-anchor="end" textLength="34.5" lengthAdjust="spacingAndGlyphs">390</text>
<rect x="1052.5" y="830" width="1" height="14" fill="#7a7a7a"/>
<text x="1158" y="844" font-family="Liberation Sans" font-size="19" fill="#000" text-anchor="end">1</text>
<text x="1219.7" y="844" font-family="Liberation Sans" font-size="19" fill="#000" text-anchor="middle" textLength="45.5" lengthAdjust="spacingAndGlyphs">TRUE</text>
<text x="133.5" y="874" font-family="Liberation Sans" font-size="19" fill="#5a5a5a" text-anchor="middle">16</text>
<text x="162" y="872" font-family="Liberation Sans" font-size="20" fill="#000" style="letter-spacing:0.74px">A220013573_S20036-15215_1_EQC</text>
<text x="570.7" y="874" font-family="Liberation Sans" font-size="19" fill="#000" textLength="35" lengthAdjust="spacingAndGlyphs">EQC</text>
<text x="750.5" y="874" font-family="Liberation Mono" font-size="20" fill="#000" text-anchor="end" textLength="23" lengthAdjust="spacingAndGlyphs">10</text>
<text x="760.5" y="874" font-family="Liberation Mono" font-size="20" fill="#000" textLength="22.5" lengthAdjust="spacingAndGlyphs">uL</text>
<text x="1039.5" y="874" font-family="Liberation Mono" font-size="20" fill="#000" text-anchor="end" textLength="34.5" lengthAdjust="spacingAndGlyphs">390</text>
<rect x="1052.5" y="860" width="1" height="14" fill="#7a7a7a"/>
<text x="1158" y="874" font-family="Liberation Sans" font-size="19" fill="#000" text-anchor="end">1</text>
<text x="1219.7" y="874" font-family="Liberation Sans" font-size="19" fill="#000" text-anchor="middle" textLength="45.5" lengthAdjust="spacingAndGlyphs">TRUE</text>
<text x="133.5" y="904" font-family="Liberation Sans" font-size="19" fill="#5a5a5a" text-anchor="middle">17</text>
<text x="162" y="902" font-family="Liberation Sans" font-size="20" fill="#000" style="letter-spacing:0.74px">A220013582_S20036-15224_1_RQC</text>
<text x="570.7" y="904" font-family="Liberation Sans" font-size="19" fill="#000" textLength="36" lengthAdjust="spacingAndGlyphs">RQC</text>
<text x="750.5" y="904" font-family="Liberation Mono" font-size="20" fill="#000" text-anchor="end" textLength="23" lengthAdjust="spacingAndGlyphs">10</text>
<text x="760.5" y="904" font-family="Liberation Mono" font-size="20" fill="#000" textLength="22.5" lengthAdjust="spacingAndGlyphs">uL</text>
<text x="1039.5" y="904" font-family="Liberation Mono" font-size="20" fill="#000" text-anchor="end" textLength="34.5" lengthAdjust="spacingAndGlyphs">390</text>
<rect x="1052.5" y="890" width="1" height="14" fill="#7a7a7a"/>
<text x="1158" y="904" font-family="Liberation Sans" font-size="19" fill="#000" text-anchor="end">1</text>
<text x="1219.7" y="904" font-family="Liberation Sans" font-size="19" fill="#000" text-anchor="middle" textLength="45.5" lengthAdjust="spacingAndGlyphs">TRUE</text>
<text x="133.5" y="934" font-family="Liberation Sans" font-size="19" fill="#5a5a5a" text-anchor="middle">18</text>
<text x="162" y="932" font-family="Liberation Sans" font-size="20" fill="#000" style="letter-spacing:0.74px">A220013583_S20036-15225_1_RQC</text>
<text x="570.7" y="934" font-family="Liberation Sans" font-size="19" fill="#000" textLength="36" lengthAdjust="spacingAndGlyphs">RQC</text>
<text x="750.5" y="934" font-family="Liberation Mono" font-size="20" fill="#000" text-anchor="end" textLength="23" lengthAdjust="spacingAndGlyphs">10</text>
<text x="760.5" y="934" font-family="Liberation Mono" font-size="20" fill="#000" textLength="22.5" lengthAdjust="spacingAndGlyphs">uL</text>
<text x="1039.5" y="934" font-family="Liberation Mono" font-size="20" fill="#000" text-anchor="end" textLength="34.5" lengthAdjust="spacingAndGlyphs">390</text>
<rect x="1052.5" y="920" width="1" height="14" fill="#7a7a7a"/>
<text x="1158" y="934" font-family="Liberation Sans" font-size="19" fill="#000" text-anchor="end">1</text>
<text x="1219.7" y="934" font-family="Liberation Sans" font-size="19" fill="#000" text-anchor="middle" textLength="45.5" lengthAdjust="spacingAndGlyphs">TRUE</text>
<text x="133.5" y="964" font-family="Liberation Sans" font-size="19" fill="#5a5a5a" text-anchor="middle">19</text>
<text x="162" y="962" font-family="Liberation Sans" font-size="20" fill="#000" style="letter-spacing:0.74px">A220013584_S20036-15226_1_RQC</text>
<text x="570.7" y="964" font-family="Liberation Sans" font-size="19" fill="#000" textLength="36" lengthAdjust="spacingAndGlyphs">RQC</text>
<text x="750.5" y="964" font-family="Liberation Mono" font-size="20" fill="#000" text-anchor="end" textLength="23" lengthAdjust="spacingAndGlyphs">10</text>
<text x="760.5" y="964" font-family="Liberation Mono" font-size="20" fill="#000" textLength="22.5" lengthAdjust="spacingAndGlyphs">uL</text>
<text x="1039.5" y="964" font-family="Liberation Mono" font-size="20" fill="#000" text-anchor="end" textLength="34.5" lengthAdjust="spacingAndGlyphs">390</text>
<rect x="1052.5" y="950" width="1" height="14" fill="#7a7a7a"/>
<text x="1158" y="964" font-family="Liberation Sans" font-size="19" fill="#000" text-anchor="end">1</text>
<text x="1219.7" y="964" font-family="Liberation Sans" font-size="19" fill="#000" text-anchor="middle" textLength="45.5" lengthAdjust="spacingAndGlyphs">TRUE</text>
<text x="133.5" y="994" font-family="Liberation Sans" font-size="19" fill="#5a5a5a" text-anchor="middle">20</text>
<text x="162" y="992" font-family="Liberation Sans" font-size="20" fill="#000" style="letter-spacing:0.74px">A220013585_S20036-15227_1_RQC</text>
<text x="570.7" y="994" font-family="Liberation Sans" font-size="19" fill="#000" textLength="36" lengthAdjust="spacingAndGlyphs">RQC</text>
<text x="750.5" y="994" font-family="Liberation Mono" font-size="20" fill="#000" text-anchor="end" textLength="23" lengthAdjust="spacingAndGlyphs">10</text>
<text x="760.5" y="994" font-family="Liberation Mono" font-size="20" fill="#000" textLength="22.5" lengthAdjust="spacingAndGlyphs">uL</text>
<text x="1039.5" y="994" font-family="Liberation Mono" font-size="20" fill="#000" text-anchor="end" textLength="34.5" lengthAdjust="spacingAndGlyphs">390</text>
<rect x="1052.5" y="980" width="1" height="14" fill="#7a7a7a"/>
<text x="1158" y="994" font-family="Liberation Sans" font-size="19" fill="#000" text-anchor="end">1</text>
<text x="1219.7" y="994" font-family="Liberation Sans" font-size="19" fill="#000" text-anchor="middle" textLength="45.5" lengthAdjust="spacingAndGlyphs">TRUE</text>
<text x="133.5" y="1024" font-family="Liberation Sans" font-size="19" fill="#5a5a5a" text-anchor="middle">21</text>
<text x="162" y="1022" font-family="Liberation Sans" font-size="20" fill="#000" style="letter-spacing:0.74px">A220013586_S20036-15228_1_RQC</text>
<text x="570.7" y="1024" font-family="Liberation Sans" font-size="19" fill="#000" textLength="36" lengthAdjust="spacingAndGlyphs">RQC</text>
<text x="750.5" y="1024" font-family="Liberation Mono" font-size="20" fill="#000" text-anchor="end" textLength="23" lengthAdjust="spacingAndGlyphs">10</text>
<text x="760.5" y="1024" font-family="Liberation Mono" font-size="20" fill="#000" textLength="22.5" lengthAdjust="spacingAndGlyphs">uL</text>
<text x="1039.5" y="1024" font-family="Liberation Mono" font-size="20" fill="#000" text-anchor="end" textLength="34.5" lengthAdjust="spacingAndGlyphs">390</text>
<rect x="1052.5" y="1010" width="1" height="14" fill="#7a7a7a"/>
<text x="1158" y="1024" font-family="Liberation Sans" font-size="19" fill="#000" text-anchor="end">1</text>
<text x="1219.7" y="1024" font-family="Liberation Sans" font-size="19" fill="#000" text-anchor="middle" textLength="45.5" lengthAdjust="spacingAndGlyphs">TRUE</text>
<text x="133.5" y="1054" font-family="Liberation Sans" font-size="19" fill="#5a5a5a" text-anchor="middle">22</text>
<text x="162" y="1052" font-family="Liberation Sans" font-size="20" fill="#000" style="letter-spacing:0.74px">A220013587_S20036-15229_1_RQC</text>
<text x="570.7" y="1054" font-family="Liberation Sans" font-size="19" fill="#000" textLength="36" lengthAdjust="spacingAndGlyphs">RQC</text>
<text x="750.5" y="1054" font-family="Liberation Mono" font-size="20" fill="#000" text-anchor="end" textLength="23" lengthAdjust="spacingAndGlyphs">10</text>
<text x="760.5" y="1054" font-family="Liberation Mono" font-size="20" fill="#000" textLength="22.5" lengthAdjust="spacingAndGlyphs">uL</text>
<text x="1039.5" y="1054" font-family="Liberation Mono" font-size="20" fill="#000" text-anchor="end" textLength="34.5" lengthAdjust="spacingAndGlyphs">390</text>
<rect x="1052.5" y="1040" width="1" height="14" fill="#7a7a7a"/>
<text x="1158" y="1054" font-family="Liberation Sans" font-size="19" fill="#000" text-anchor="end">1</text>
<text x="1219.7" y="1054" font-family="Liberation Sans" font-size="19" fill="#000" text-anchor="middle" textLength="45.5" lengthAdjust="spacingAndGlyphs">TRUE</text>
<text x="133.5" y="1084" font-family="Liberation Sans" font-size="19" fill="#5a5a5a" text-anchor="middle">23</text>
<text x="162" y="1082" font-family="Liberation Sans" font-size="20" fill="#000" style="letter-spacing:0.74px">A220013588_S20036-15230_1_RQC</text>
<text x="570.7" y="1084" font-family="Liberation Sans" font-size="19" fill="#000" textLength="36" lengthAdjust="spacingAndGlyphs">RQC</text>
<text x="750.5" y="1084" font-family="Liberation Mono" font-size="20" fill="#000" text-anchor="end" textLength="23" lengthAdjust="spacingAndGlyphs">10</text>
<text x="760.5" y="1084" font-family="Liberation Mono" font-size="20" fill="#000" textLength="22.5" lengthAdjust="spacingAndGlyphs">uL</text>
<text x="1039.5" y="1084" font-family="Liberation Mono" font-size="20" fill="#000" text-anchor="end" textLength="34.5" lengthAdjust="spacingAndGlyphs">390</text>
<rect x="1052.5" y="1070" width="1" height="14" fill="#7a7a7a"/>
<text x="1158" y="1084" font-family="Liberation Sans" font-size="19" fill="#000" text-anchor="end">1</text>
<text x="1219.7" y="1084" font-family="Liberation Sans" font-size="19" fill="#000" text-anchor="middle" textLength="45.5" lengthAdjust="spacingAndGlyphs">TRUE</text>
<text x="133.5" y="1114" font-family="Liberation Sans" font-size="19" fill="#5a5a5a" text-anchor="middle">24</text>
<text x="162" y="1112" font-family="Liberation Sans" font-size="20" fill="#000" style="letter-spacing:0.74px">A220013589_S20036-15231_1_RQC</text>
<text x="570.7" y="1114" font-family="Liberation Sans" font-size="19" fill="#000" textLength="36" lengthAdjust="spacingAndGlyphs">RQC</text>
<text x="750.5" y="1114" font-family="Liberation Mono" font-size="20" fill="#000" text-anchor="end" textLength="23" lengthAdjust="spacingAndGlyphs">10</text>
<text x="760.5" y="1114" font-family="Liberation Mono" font-size="20" fill="#000" textLength="22.5" lengthAdjust="spacingAndGlyphs">uL</text>
<text x="1039.5" y="1114" font-family="Liberation Mono" font-size="20" fill="#000" text-anchor="end" textLength="34.5" lengthAdjust="spacingAndGlyphs">390</text>
<rect x="1052.5" y="1100" width="1" height="14" fill="#7a7a7a"/>
<text x="1158" y="1114" font-family="Liberation Sans" font-size="19" fill="#000" text-anchor="end">1</text>
<text x="1219.7" y="1114" font-family="Liberation Sans" font-size="19" fill="#000" text-anchor="middle" textLength="45.5" lengthAdjust="spacingAndGlyphs">TRUE</text>
<text x="133.5" y="1144" font-family="Liberation Sans" font-size="19" fill="#5a5a5a" text-anchor="middle">25</text>
<text x="162" y="1142" font-family="Liberation Sans" font-size="20" fill="#000" style="letter-spacing:0.74px">A220013590_S20036-15232_1_EQC</text>
<text x="570.7" y="1144" font-family="Liberation Sans" font-size="19" fill="#000" textLength="35" lengthAdjust="spacingAndGlyphs">EQC</text>
<text x="750.5" y="1144" font-family="Liberation Mono" font-size="20" fill="#000" text-anchor="end" textLength="23" lengthAdjust="spacingAndGlyphs">10</text>
<text x="760.5" y="1144" font-family="Liberation Mono" font-size="20" fill="#000" textLength="22.5" lengthAdjust="spacingAndGlyphs">uL</text>
<text x="1039.5" y="1144" font-family="Liberation Mono" font-size="20" fill="#000" text-anchor="end" textLength="34.5" lengthAdjust="spacingAndGlyphs">390</text>
<rect x="1052.5" y="1130" width="1" height="14" fill="#7a7a7a"/>
<text x="1158" y="1144" font-family="Liberation Sans" font-size="19" fill="#000" text-anchor="end">1</text>
<text x="1219.7" y="1144" font-family="Liberation Sans" font-size="19" fill="#000" text-anchor="middle" textLength="45.5" lengthAdjust="spacingAndGlyphs">TRUE</text>
<text x="133.5" y="1174" font-family="Liberation Sans" font-size="19" fill="#5a5a5a" text-anchor="middle">26</text>
<text x="162" y="1172" font-family="Liberation Sans" font-size="20" fill="#000" style="letter-spacing:0.74px">A220013591_S20036-15264_1_PBLK</text>
<text x="570.7" y="1174" font-family="Liberation Sans" font-size="19" fill="#000" textLength="46" lengthAdjust="spacingAndGlyphs">PBLK</text>
<text x="750.5" y="1174" font-family="Liberation Mono" font-size="20" fill="#000" text-anchor="end" textLength="23" lengthAdjust="spacingAndGlyphs">10</text>
<text x="760.5" y="1174" font-family="Liberation Mono" font-size="20" fill="#000" textLength="22.5" lengthAdjust="spacingAndGlyphs">uL</text>
<text x="1039.5" y="1174" font-family="Liberation Mono" font-size="20" fill="#000" text-anchor="end" textLength="34.5" lengthAdjust="spacingAndGlyphs">390</text>
<rect x="1052.5" y="1160" width="1" height="14" fill="#7a7a7a"/>
<text x="1158" y="1174" font-family="Liberation Sans" font-size="19" fill="#000" text-anchor="end">1</text>
<text x="1219.7" y="1174" font-family="Liberation Sans" font-size="19" fill="#000" text-anchor="middle" textLength="45.5" lengthAdjust="spacingAndGlyphs">TRUE</text>
<text x="133.5" y="1204" font-family="Liberation Sans" font-size="19" fill="#5a5a5a" text-anchor="middle">27</text>
<text x="162" y="1202" font-family="Liberation Sans" font-size="20" fill="#000" style="letter-spacing:0.74px">A220013592_S20036-15265_1_PBLK</text>
<text x="570.7" y="1204" font-family="Liberation Sans" font-size="19" fill="#000" textLength="46" lengthAdjust="spacingAndGlyphs">PBLK</text>
<text x="750.5" y="1204" font-family="Liberation Mono" font-size="20" fill="#000" text-anchor="end" textLength="23" lengthAdjust="spacingAndGlyphs">10</text>
<text x="760.5" y="1204" font-family="Liberation Mono" font-size="20" fill="#000" textLength="22.5" lengthAdjust="spacingAndGlyphs">uL</text>
<text x="1039.5" y="1204" font-family="Liberation Mono" font-size="20" fill="#000" text-anchor="end" textLength="34.5" lengthAdjust="spacingAndGlyphs">390</text>
<rect x="1052.5" y="1190" width="1" height="14" fill="#7a7a7a"/>
<text x="1158" y="1204" font-family="Liberation Sans" font-size="19" fill="#000" text-anchor="end">1</text>
<text x="1219.7" y="1204" font-family="Liberation Sans" font-size="19" fill="#000" text-anchor="middle" textLength="45.5" lengthAdjust="spacingAndGlyphs">TRUE</text>
<text x="133.5" y="1234" font-family="Liberation Sans" font-size="19" fill="#5a5a5a" text-anchor="middle">28</text>
<text x="162" y="1232" font-family="Liberation Sans" font-size="20" fill="#000" style="letter-spacing:0.74px">A220013593_S20036-15137_1_SBLK</text>
<text x="570.7" y="1234" font-family="Liberation Sans" font-size="19" fill="#000" textLength="45" lengthAdjust="spacingAndGlyphs">SBLK</text>
<text x="750.5" y="1234" font-family="Liberation Mono" font-size="20" fill="#000" text-anchor="end" textLength="23" lengthAdjust="spacingAndGlyphs">10</text>
<text x="760.5" y="1234" font-family="Liberation Mono" font-size="20" fill="#000" textLength="22.5" lengthAdjust="spacingAndGlyphs">uL</text>
<text x="1039.5" y="1234" font-family="Liberation Mono" font-size="20" fill="#000" text-anchor="end" textLength="34.5" lengthAdjust="spacingAndGlyphs">390</text>
<rect x="1052.5" y="1220" width="1" height="14" fill="#7a7a7a"/>
<text x="1158" y="1234" font-family="Liberation Sans" font-size="19" fill="#000" text-anchor="end">1</text>
<text x="1219.7" y="1234" font-family="Liberation Sans" font-size="19" fill="#000" text-anchor="middle" textLength="45.5" lengthAdjust="spacingAndGlyphs">TRUE</text>
<text x="133.5" y="1264" font-family="Liberation Sans" font-size="19" fill="#5a5a5a" text-anchor="middle">29</text>
<text x="162" y="1262" font-family="Liberation Sans" font-size="20" fill="#000" style="letter-spacing:0.74px">A220013594_S20036-15276_1_MBLK</text>
<text x="570.7" y="1264" font-family="Liberation Sans" font-size="19" fill="#000" textLength="50" lengthAdjust="spacingAndGlyphs">MBLK</text>
<text x="750.5" y="1264" font-family="Liberation Mono" font-size="20" fill="#000" text-anchor="end" textLength="23" lengthAdjust="spacingAndGlyphs">10</text>
<text x="760.5" y="1264" font-family="Liberation Mono" font-size="20" fill="#000" textLength="22.5" lengthAdjust="spacingAndGlyphs">uL</text>
<text x="1039.5" y="1264" font-family="Liberation Mono" font-size="20" fill="#000" text-anchor="end" textLength="34.5" lengthAdjust="spacingAndGlyphs">390</text>
<rect x="1052.5" y="1250" width="1" height="14" fill="#7a7a7a"/>
<text x="1158" y="1264" font-family="Liberation Sans" font-size="19" fill="#000" text-anchor="end">1</text>
<text x="1219.7" y="1264" font-family="Liberation Sans" font-size="19" fill="#000" text-anchor="middle" textLength="45.5" lengthAdjust="spacingAndGlyphs">TRUE</text>
<text x="133.5" y="1294" font-family="Liberation Sans" font-size="19" fill="#5a5a5a" text-anchor="middle">30</text>
<text x="162" y="1292" font-family="Liberation Sans" font-size="20" fill="#000" style="letter-spacing:0.74px">A220013595_S20036-15277_1_MBLK</text>
<text x="570.7" y="1294" font-family="Liberation Sans" font-size="19" fill="#000" textLength="50" lengthAdjust="spacingAndGlyphs">MBLK</text>
<text x="750.5" y="1294" font-family="Liberation Mono" font-size="20" fill="#000" text-anchor="end" textLength="23" lengthAdjust="spacingAndGlyphs">10</text>
<text x="760.5" y="1294" font-family="Liberation Mono" font-size="20" fill="#000" textLength="22.5" lengthAdjust="spacingAndGlyphs">uL</text>
<text x="1039.5" y="1294" font-family="Liberation Mono" font-size="20" fill="#000" text-anchor="end" textLength="34.5" lengthAdjust="spacingAndGlyphs">390</text>
<rect x="1052.5" y="1280" width="1" height="14" fill="#7a7a7a"/>
<text x="1158" y="1294" font-family="Liberation Sans" font-size="19" fill="#000" text-anchor="end">1</text>
<text x="1219.7" y="1294" font-family="Liberation Sans" font-size="19" fill="#000" text-anchor="middle" textLength="45.5" lengthAdjust="spacingAndGlyphs">TRUE</text>
</g>
<rect x="864.5" y="550.5" width="29" height="29" fill="url(#gDrop)" stroke="#8c8c8c" stroke-width="1.2" rx="1.5"/>
<path d="M872.5 561 L886 561 L879.2 569.5 Z" fill="#7a7a7a"/>
<rect x="1309" y="759" width="728" height="346" fill="#ffffff"/>
<rect x="1312" y="761.5" width="722" height="340.5" fill="#ffffff" stroke="#555555" stroke-width="2"/>
<rect x="1323" y="308" width="225" height="61" fill="#ededed"/>
<line x1="1323.9" y1="308" x2="1323.9" y2="369" stroke="#474747" stroke-width="1.9" />
<line x1="1547" y1="308" x2="1547" y2="369" stroke="#505050" stroke-width="3" />
<line x1="1323" y1="367.8" x2="1548" y2="367.8" stroke="#505050" stroke-width="3" />
<text x="1341" y="348" font-family="Liberation Sans" font-size="27" fill="#0a0a0a" font-weight="bold" textLength="187.4" lengthAdjust="spacing" stroke="#0a0a0a" stroke-width="0.5">Clear Columns</text>
<rect x="1313" y="424" width="551" height="64" fill="#dde9f5"/>
<line x1="1313" y1="424.9" x2="1864" y2="424.9" stroke="#474747" stroke-width="1.9" />
<line x1="1313.9" y1="424" x2="1313.9" y2="488" stroke="#474747" stroke-width="1.9" />
<line x1="1863" y1="424" x2="1863" y2="488" stroke="#505050" stroke-width="3" />
<line x1="1313" y1="486.8" x2="1864" y2="486.8" stroke="#505050" stroke-width="3" />
<text x="1327" y="467" font-family="Liberation Sans" font-size="27" fill="#0a0a0a" font-weight="bold" textLength="521" lengthAdjust="spacing" stroke="#0a0a0a" stroke-width="0.5">Load Sample Annotation from Raw Data</text>
<rect x="1313" y="503" width="551" height="64" fill="#dde9f5"/>
<line x1="1313" y1="503.9" x2="1864" y2="503.9" stroke="#474747" stroke-width="1.9" />
<line x1="1313.9" y1="503" x2="1313.9" y2="567" stroke="#474747" stroke-width="1.9" />
<line x1="1863" y1="503" x2="1863" y2="567" stroke="#505050" stroke-width="3" />
<line x1="1313" y1="565.8" x2="1864" y2="565.8" stroke="#505050" stroke-width="3" />
<text x="1321" y="544.5" font-family="Liberation Sans" font-size="27" fill="#0a0a0a" font-weight="bold" textLength="536.5" lengthAdjust="spacing" stroke="#0a0a0a" stroke-width="0.5">Load Sample Annotation from Table Data</text>
<rect x="1313" y="581" width="519" height="62.5" fill="#dde9f5"/>
<line x1="1313" y1="581.9" x2="1832" y2="581.9" stroke="#474747" stroke-width="1.9" />
<line x1="1313.9" y1="581" x2="1313.9" y2="643.5" stroke="#474747" stroke-width="1.9" />
<line x1="1831" y1="581" x2="1831" y2="643.5" stroke="#505050" stroke-width="3" />
<line x1="1313" y1="642.3" x2="1832" y2="642.3" stroke="#505050" stroke-width="3" />
<text x="1348.6" y="622" font-family="Liberation Sans" font-size="27" fill="#0a0a0a" font-weight="bold" textLength="446.4" lengthAdjust="spacing" stroke="#0a0a0a" stroke-width="0.5">Autofill 'Sample' in Sample_Type</text>
<rect x="1313" y="669.5" width="578" height="62.5" fill="#dde9f5"/>
<line x1="1313" y1="670.4" x2="1891" y2="670.4" stroke="#474747" stroke-width="1.9" />
<line x1="1313.9" y1="669.5" x2="1313.9" y2="732" stroke="#474747" stroke-width="1.9" />
<line x1="1890" y1="669.5" x2="1890" y2="732" stroke="#505050" stroke-width="3" />
<line x1="1313" y1="730.8" x2="1891" y2="730.8" stroke="#505050" stroke-width="3" />
<text x="1365" y="710.6" font-family="Liberation Sans" font-size="27" fill="#0a0a0a" font-weight="bold" textLength="471" lengthAdjust="spacing" stroke="#0a0a0a" stroke-width="0.5">Load RQC Samples to Dilution_Table</text>
<rect x="1314.5" y="427" width="548" height="3.2" fill="#ffffff"/>
<rect x="1275" y="430" width="863" height="2" fill="#9c9c9c"/>
<svg x="1300" y="308" width="270" height="80" overflow="hidden"><g transform="translate(-1300 -308)">
<rect x="1315.5" y="297.5" width="15" height="15" fill="#ffffff" stroke="#5c5c5c" stroke-width="1.3" rx="0.8" filter="url(#fSh)"/>
<rect x="1429.5" y="297.5" width="15" height="15" fill="#ffffff" stroke="#5c5c5c" stroke-width="1.3" rx="0.8" filter="url(#fSh)"/>
<rect x="1540.5" y="297.5" width="15" height="15" fill="#ffffff" stroke="#5c5c5c" stroke-width="1.3" rx="0.8" filter="url(#fSh)"/>
</g></svg>
<rect x="1315.5" y="329.5" width="15" height="15" fill="#ffffff" stroke="#5c5c5c" stroke-width="1.3" rx="0.8" filter="url(#fSh)"/>
<rect x="1540.5" y="329.5" width="15" height="15" fill="#ffffff" stroke="#5c5c5c" stroke-width="1.3" rx="0.8" filter="url(#fSh)"/>
<rect x="1315.5" y="361.5" width="15" height="15" fill="#ffffff" stroke="#5c5c5c" stroke-width="1.3" rx="0.8" filter="url(#fSh)"/>
<rect x="1429.5" y="361.5" width="15" height="15" fill="#ffffff" stroke="#5c5c5c" stroke-width="1.3" rx="0.8" filter="url(#fSh)"/>
<rect x="1540.5" y="361.5" width="15" height="15" fill="#ffffff" stroke="#5c5c5c" stroke-width="1.3" rx="0.8" filter="url(#fSh)"/>
<rect x="1305.5" y="416.5" width="15" height="15" fill="#ffffff" stroke="#5c5c5c" stroke-width="1.3" rx="0.8" filter="url(#fSh)"/>
<rect x="1581.0" y="416.5" width="15" height="15" fill="#ffffff" stroke="#5c5c5c" stroke-width="1.3" rx="0.8" filter="url(#fSh)"/>
<rect x="1856.5" y="416.5" width="15" height="15" fill="#ffffff" stroke="#5c5c5c" stroke-width="1.3" rx="0.8" filter="url(#fSh)"/>
<rect x="1305.5" y="448.5" width="15" height="15" fill="#ffffff" stroke="#5c5c5c" stroke-width="1.3" rx="0.8" filter="url(#fSh)"/>
<rect x="1856.5" y="448.5" width="15" height="15" fill="#ffffff" stroke="#5c5c5c" stroke-width="1.3" rx="0.8" filter="url(#fSh)"/>
<rect x="1305.5" y="480.5" width="15" height="15" fill="#ffffff" stroke="#5c5c5c" stroke-width="1.3" rx="0.8" filter="url(#fSh)"/>
<rect x="1581.0" y="480.5" width="15" height="15" fill="#ffffff" stroke="#5c5c5c" stroke-width="1.3" rx="0.8" filter="url(#fSh)"/>
<rect x="1856.5" y="480.5" width="15" height="15" fill="#ffffff" stroke="#5c5c5c" stroke-width="1.3" rx="0.8" filter="url(#fSh)"/>
<rect x="1305.5" y="495.5" width="15" height="15" fill="#ffffff" stroke="#5c5c5c" stroke-width="1.3" rx="0.8" filter="url(#fSh)"/>
<rect x="1581.0" y="495.5" width="15" height="15" fill="#ffffff" stroke="#5c5c5c" stroke-width="1.3" rx="0.8" filter="url(#fSh)"/>
<rect x="1856.5" y="495.5" width="15" height="15" fill="#ffffff" stroke="#5c5c5c" stroke-width="1.3" rx="0.8" filter="url(#fSh)"/>
<rect x="1305.5" y="527.5" width="15" height="15" fill="#ffffff" stroke="#5c5c5c" stroke-width="1.3" rx="0.8" filter="url(#fSh)"/>
<rect x="1856.5" y="527.5" width="15" height="15" fill="#ffffff" stroke="#5c5c5c" stroke-width="1.3" rx="0.8" filter="url(#fSh)"/>
<rect x="1305.5" y="559.5" width="15" height="15" fill="#ffffff" stroke="#5c5c5c" stroke-width="1.3" rx="0.8" filter="url(#fSh)"/>
<rect x="1581.0" y="559.5" width="15" height="15" fill="#ffffff" stroke="#5c5c5c" stroke-width="1.3" rx="0.8" filter="url(#fSh)"/>
<rect x="1856.5" y="559.5" width="15" height="15" fill="#ffffff" stroke="#5c5c5c" stroke-width="1.3" rx="0.8" filter="url(#fSh)"/>
<rect x="1305.5" y="573.5" width="15" height="15" fill="#ffffff" stroke="#5c5c5c" stroke-width="1.3" rx="0.8" filter="url(#fSh)"/>
<rect x="1565.0" y="573.5" width="15" height="15" fill="#ffffff" stroke="#5c5c5c" stroke-width="1.3" rx="0.8" filter="url(#fSh)"/>
<rect x="1824.5" y="573.5" width="15" height="15" fill="#ffffff" stroke="#5c5c5c" stroke-width="1.3" rx="0.8" filter="url(#fSh)"/>
<rect x="1305.5" y="604.75" width="15" height="15" fill="#ffffff" stroke="#5c5c5c" stroke-width="1.3" rx="0.8" filter="url(#fSh)"/>
<rect x="1824.5" y="604.75" width="15" height="15" fill="#ffffff" stroke="#5c5c5c" stroke-width="1.3" rx="0.8" filter="url(#fSh)"/>
<rect x="1305.5" y="636.0" width="15" height="15" fill="#ffffff" stroke="#5c5c5c" stroke-width="1.3" rx="0.8" filter="url(#fSh)"/>
<rect x="1565.0" y="636.0" width="15" height="15" fill="#ffffff" stroke="#5c5c5c" stroke-width="1.3" rx="0.8" filter="url(#fSh)"/>
<rect x="1824.5" y="636.0" width="15" height="15" fill="#ffffff" stroke="#5c5c5c" stroke-width="1.3" rx="0.8" filter="url(#fSh)"/>
<rect x="1305.5" y="662.0" width="15" height="15" fill="#ffffff" stroke="#5c5c5c" stroke-width="1.3" rx="0.8" filter="url(#fSh)"/>
<rect x="1594.5" y="662.0" width="15" height="15" fill="#ffffff" stroke="#5c5c5c" stroke-width="1.3" rx="0.8" filter="url(#fSh)"/>
<rect x="1883.5" y="662.0" width="15" height="15" fill="#ffffff" stroke="#5c5c5c" stroke-width="1.3" rx="0.8" filter="url(#fSh)"/>
<rect x="1305.5" y="693.25" width="15" height="15" fill="#ffffff" stroke="#5c5c5c" stroke-width="1.3" rx="0.8" filter="url(#fSh)"/>
<rect x="1883.5" y="693.25" width="15" height="15" fill="#ffffff" stroke="#5c5c5c" stroke-width="1.3" rx="0.8" filter="url(#fSh)"/>
<rect x="1305.5" y="724.5" width="15" height="15" fill="#ffffff" stroke="#5c5c5c" stroke-width="1.3" rx="0.8" filter="url(#fSh)"/>
<rect x="1594.5" y="724.5" width="15" height="15" fill="#ffffff" stroke="#5c5c5c" stroke-width="1.3" rx="0.8" filter="url(#fSh)"/>
<rect x="1883.5" y="724.5" width="15" height="15" fill="#ffffff" stroke="#5c5c5c" stroke-width="1.3" rx="0.8" filter="url(#fSh)"/>
<rect x="1304.5" y="754.0" width="15" height="15" fill="#ffffff" stroke="#5c5c5c" stroke-width="1.3" rx="0.8" filter="url(#fSh)"/>
<rect x="1665.5" y="754.0" width="15" height="15" fill="#ffffff" stroke="#5c5c5c" stroke-width="1.3" rx="0.8" filter="url(#fSh)"/>
<rect x="2026.5" y="754.0" width="15" height="15" fill="#ffffff" stroke="#5c5c5c" stroke-width="1.3" rx="0.8" filter="url(#fSh)"/>
<rect x="1304.5" y="924.25" width="15" height="15" fill="#ffffff" stroke="#5c5c5c" stroke-width="1.3" rx="0.8" filter="url(#fSh)"/>
<rect x="2026.5" y="924.25" width="15" height="15" fill="#ffffff" stroke="#5c5c5c" stroke-width="1.3" rx="0.8" filter="url(#fSh)"/>
<rect x="1304.5" y="1094.5" width="15" height="15" fill="#ffffff" stroke="#5c5c5c" stroke-width="1.3" rx="0.8" filter="url(#fSh)"/>
<rect x="1665.5" y="1094.5" width="15" height="15" fill="#ffffff" stroke="#5c5c5c" stroke-width="1.3" rx="0.8" filter="url(#fSh)"/>
<rect x="2026.5" y="1094.5" width="15" height="15" fill="#ffffff" stroke="#5c5c5c" stroke-width="1.3" rx="0.8" filter="url(#fSh)"/>
<line x1="1589" y1="394" x2="1589" y2="424" stroke="#474747" stroke-width="1.8" />
<circle cx="1589" cy="383" r="11.4" fill="#ffffff" stroke="#8c8c8c" stroke-width="1.1" filter="url(#fSh)"/>
<path d="M1593.4 386.9 A5.8 5.8 0 1 1 1592.6 378.4" fill="none" stroke="#646464" stroke-width="1.9"/>
<path d="M1589.4 381.8 L1594.9 381.8 L1594.9 376.2 Z" fill="#646464"/>
<line x1="1589" y1="470" x2="1589" y2="503" stroke="#474747" stroke-width="1.8" />
<circle cx="1589" cy="459" r="11.4" fill="#ffffff" stroke="#8c8c8c" stroke-width="1.1" filter="url(#fSh)"/>
<path d="M1593.4 462.9 A5.8 5.8 0 1 1 1592.6 454.4" fill="none" stroke="#646464" stroke-width="1.9"/>
<path d="M1589.4 457.8 L1594.9 457.8 L1594.9 452.2 Z" fill="#646464"/>
<line x1="1572.5" y1="549.5" x2="1572.5" y2="581" stroke="#474747" stroke-width="1.8" />
<circle cx="1572.5" cy="538.5" r="11.4" fill="#ffffff" stroke="#8c8c8c" stroke-width="1.1" filter="url(#fSh)"/>
<path d="M1576.9 542.4 A5.8 5.8 0 1 1 1576.1 533.9" fill="none" stroke="#646464" stroke-width="1.9"/>
<path d="M1572.9 537.3 L1578.4 537.3 L1578.4 531.7 Z" fill="#646464"/>
<line x1="1602" y1="638" x2="1602" y2="669.5" stroke="#474747" stroke-width="1.8" />
<circle cx="1602" cy="627" r="11.4" fill="#ffffff" stroke="#8c8c8c" stroke-width="1.1" filter="url(#fSh)"/>
<path d="M1606.4 630.9 A5.8 5.8 0 1 1 1605.6 622.4" fill="none" stroke="#646464" stroke-width="1.9"/>
<path d="M1602.4 625.8 L1607.9 625.8 L1607.9 620.2 Z" fill="#646464"/>
<line x1="1673" y1="729" x2="1673" y2="761.5" stroke="#474747" stroke-width="1.8" />
<circle cx="1673" cy="718" r="11.4" fill="#ffffff" stroke="#8c8c8c" stroke-width="1.1" filter="url(#fSh)"/>
<path d="M1677.4 721.9 A5.8 5.8 0 1 1 1676.6 713.4" fill="none" stroke="#646464" stroke-width="1.9"/>
<path d="M1673.4 716.8 L1678.9 716.8 L1678.9 711.2 Z" fill="#646464"/>
<text x="1362.5" y="791" font-family="Liberation Serif" font-size="24" fill="#000" textLength="565.5" lengthAdjust="spacing">Assuming the analyte and the selected ISTD have identical</text>
<text x="1362.5" y="817" font-family="Liberation Serif" font-size="24" fill="#000" textLength="636" lengthAdjust="spacing">response factors, the concentration of an analyte in the sample can</text>
<text x="1362.5" y="843" font-family="Liberation Serif" font-size="24" fill="#000">be calculated as</text>
<text x="1363" y="903" font-family="Liberation Serif" font-size="30" fill="#000" style="font-style:italic" stroke="#000" stroke-width="0.45">c</text>
<text x="1377" y="911" font-family="Liberation Serif" font-size="25" fill="#000" textLength="86" lengthAdjust="spacing" stroke="#000" stroke-width="0.35">Analyte</text>
<text x="1474" y="906" font-family="Liberation Sans" font-size="34" fill="#000" textLength="21" lengthAdjust="spacingAndGlyphs">=</text>
<text x="1507" y="887" font-family="Liberation Serif" font-size="25" fill="#000" textLength="56" lengthAdjust="spacing" style="font-style:italic" stroke="#000" stroke-width="0.45">Area</text>
<text x="1564" y="891" font-family="Liberation Serif" font-size="22" fill="#000" textLength="76" lengthAdjust="spacing" stroke="#000" stroke-width="0.35">Analyte</text>
<rect x="1506" y="894.5" width="135" height="2.2" fill="#000"/>
<text x="1522" y="921" font-family="Liberation Serif" font-size="25" fill="#000" textLength="56" lengthAdjust="spacing" style="font-style:italic" stroke="#000" stroke-width="0.45">Area</text>
<text x="1577" y="926" font-family="Liberation Serif" font-size="22" fill="#000" textLength="47" lengthAdjust="spacing" stroke="#000" stroke-width="0.35">ISTD</text>
<text x="1646" y="908" font-family="Liberation Sans" font-size="36" fill="#000">×</text>
<text x="1743" y="891" font-family="Liberation Serif" font-size="25" fill="#000" style="font-style:italic" stroke="#000" stroke-width="0.45">v</text>
<text x="1757" y="893" font-family="Liberation Serif" font-size="22" fill="#000" textLength="48" lengthAdjust="spacing" stroke="#000" stroke-width="0.35">ISTD</text>
<rect x="1680" y="894.5" width="189" height="2.2" fill="#000"/>
<text x="1682" y="920" font-family="Liberation Serif" font-size="25" fill="#000" textLength="180" lengthAdjust="spacing" style="font-style:italic" stroke="#000" stroke-width="0.45">Sample Amount</text>
<text x="1887" y="908" font-family="Liberation Sans" font-size="34" fill="#000">×</text>
<text x="1908" y="905" font-family="Liberation Serif" font-size="30" fill="#000" style="font-style:italic" stroke="#000" stroke-width="0.45">c</text>
<text x="1923" y="911" font-family="Liberation Serif" font-size="19" fill="#000" textLength="41" lengthAdjust="spacing" style="font-style:italic" stroke="#000" stroke-width="0.45">ISTD</text>
<text x="1362.5" y="962.5" font-family="Liberation Serif" font-size="22" fill="#000">where</text>
<text x="1362.5" y="1002" font-family="Liberation Serif" font-size="20" fill="#000" style="font-style:italic">c</text>
<text x="1372" y="1006" font-family="Liberation Serif" font-size="13" fill="#000" style="font-style:italic">Analyte</text>
<text x="1417" y="1002" font-family="Liberation Serif" font-size="18" fill="#000">:</text>
<text x="1614.5" y="1003" font-family="Liberation Serif" font-size="22" fill="#000" textLength="356.5" lengthAdjust="spacing">molar concentration of the analyte in the</text>
<text x="1362.5" y="1026.5" font-family="Liberation Serif" font-size="22" fill="#000">sample</text>
<text x="1362.5" y="1066" font-family="Liberation Serif" font-size="21" fill="#000" style="font-style:italic">Area</text>
<text x="1405" y="1070" font-family="Liberation Serif" font-size="13" fill="#000" style="font-style:italic">Analyte</text>
<text x="1450" y="1066" font-family="Liberation Serif" font-size="18" fill="#000">:</text>
<text x="1614.5" y="1066" font-family="Liberation Serif" font-size="22" fill="#000" textLength="181.5" lengthAdjust="spacing">peak area of analyte,</text>
<rect x="112" y="1297" width="2026" height="52" fill="url(#gTabs)"/>
<line x1="112" y1="1297" x2="2138" y2="1297" stroke="#d4d4d4" stroke-width="1.2" />
<path d="M142 1323 L155.7 1313 L155.7 1333 Z" fill="#b5b5b5"/>
<path d="M188 1313 L202 1323 L188 1333 Z" fill="#b5b5b5"/>
<line x1="233" y1="1301" x2="233" y2="1340" stroke="#d0d0d0" stroke-width="1.5" />
<rect x="240" y="1302" width="329" height="40" fill="#c6e0b4"/>
<text x="273" y="1330.5" font-family="Liberation Sans" font-size="24" fill="#000" textLength="261.7" lengthAdjust="spacing" stroke="#000" stroke-width="0.4">Transition_Name_Annot</text>
<rect x="584" y="1302" width="188" height="40" fill="#00b050"/>
<text x="613" y="1330.5" font-family="Liberation Sans" font-size="24" fill="#fff" textLength="129.7" lengthAdjust="spacing" stroke="#fff" stroke-width="0.7">ISTD_Annot</text>
<path d="M779 1296 L1016 1296 L1016 1338 Q1016 1342.5 1011.5 1342.5 L783.5 1342.5 Q779 1342.5 779 1338 Z" fill="#ffffff" stroke="#d9d9d9" stroke-width="1.2" filter="url(#fSh)"/>
<rect x="786.5" y="1302.4" width="223" height="33.6" fill="url(#gActive)"/>
<text x="815.7" y="1330.5" font-family="Liberation Sans" font-size="24" fill="#2a7d4b" textLength="164.3" lengthAdjust="spacing" stroke="#2a7d4b" stroke-width="0.6">Sample_Annot</text>
<rect x="1024" y="1302" width="220" height="40" fill="#ffc000"/>
<text x="1053" y="1330.5" font-family="Liberation Sans" font-size="24" fill="#000" textLength="161.7" lengthAdjust="spacing" stroke="#000" stroke-width="0.4">Dilution_Annot</text>
<line x1="1251" y1="1301" x2="1251" y2="1340" stroke="#d0d0d0" stroke-width="1.5" />
<text x="1303.6" y="1330.5" font-family="Liberation Sans" font-size="24" fill="#575757" textLength="51.8" lengthAdjust="spacing">Lists</text>
<line x1="1408.6" y1="1301" x2="1408.6" y2="1340" stroke="#d0d0d0" stroke-width="1.5" />
<path d="M1447.8 1311.5 L1447.8 1330.5 M1438.3 1321 L1457.3 1321" fill="none" stroke="#555" stroke-width="3"/>
<line x1="1484.7" y1="1301" x2="1484.7" y2="1340" stroke="#d0d0d0" stroke-width="1.5" />
<rect x="112" y="1349" width="2026" height="45" fill="url(#gStat)"/>
<rect x="112" y="1347.5" width="2026" height="2" fill="#bdbdbd"/>
<text x="161" y="1380" font-family="Liberation Sans" font-size="24" fill="#5b5b5b" textLength="69" lengthAdjust="spacing">Ready</text>
<g fill="none" stroke="#5f5f5f" stroke-width="1.9" stroke-linecap="round" stroke-linejoin="round"><circle cx="282.7" cy="1360.6" r="3.7"/><path d="M282.7 1365 C 279 1365, 276 1362.5, 273 1362.3 C 270.5 1362, 270 1365.5, 272.5 1366.5 L277 1368 L277.5 1371.5 L275 1381 C 274 1385.5, 279.5 1386, 280.3 1381.5 L282.7 1375.8 L284.9 1379.8"/><path d="M282.7 1365 C 286 1365, 289 1363, 292.5 1362.3 C 295.5 1361.8, 297 1365.3, 294 1366.5 L288.3 1368.6"/><path d="M285.8 1371.8 L298.8 1385 M298.8 1371.8 L285.8 1385" stroke-linecap="butt"/></g>
<text x="307" y="1380" font-family="Liberation Sans" font-size="24" fill="#5b5b5b" textLength="278" lengthAdjust="spacing">Accessibility: Investigate</text>
<text x="1371" y="1380" font-family="Liberation Sans" font-size="24" fill="#5b5b5b" textLength="107" lengthAdjust="spacing">Count: 10</text>
<rect x="1500" y="1349.5" width="73.5" height="44.5" fill="#a9a9a9"/>
<g fill="none" stroke="#ffffff" stroke-width="1.8"><rect x="1524.5" y="1358.5" width="25" height="25" rx="1"/><path d="M1532.8 1358.5 V1383.5 M1541.2 1358.5 V1383.5 M1524.5 1366.8 H1549.5 M1524.5 1375.2 H1549.5"/></g>
<g fill="none" stroke="#6a6a6a" stroke-width="1.8"><rect x="1595.5" y="1358.5" width="26" height="25" rx="1"/><rect x="1600" y="1363" width="17" height="16"/><path d="M1603 1367 H1614 M1603 1371 H1614 M1603 1375 H1614"/></g>
<g fill="none" stroke="#6a6a6a" stroke-width="1.8"><rect x="1666.5" y="1358.5" width="27" height="25" rx="1"/><path d="M1666.5 1370 H1680 V1358.5 M1673 1358.5 V1370"/></g>
<line x1="1733" y1="1371.5" x2="1748" y2="1371.5" stroke="#606060" stroke-width="3" />
<rect x="1762" y="1368" width="200" height="7" fill="#a7a7a7" rx="3.5"/>
<circle cx="1862" cy="1371.5" r="15" fill="#ffffff" stroke="#cfcfcf" stroke-width="1" filter="url(#fSh)"/>
<path d="M1976 1371.5 H1992 M1984 1363.5 V1379.5" fill="none" stroke="#606060" stroke-width="3"/>
<text x="2026" y="1380" font-family="Liberation Sans" font-size="24" fill="#5b5b5b" textLength="63" lengthAdjust="spacing">100%</text>
</svg></div>
</body></html>
